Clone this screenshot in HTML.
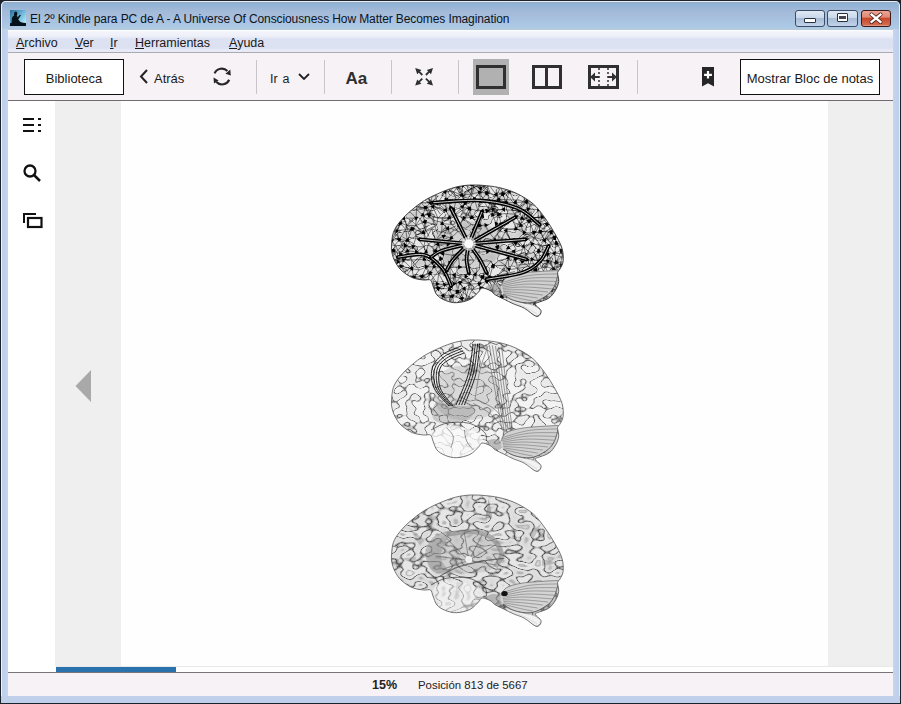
<!DOCTYPE html>
<html><head><meta charset="utf-8">
<style>
*{margin:0;padding:0;box-sizing:border-box}
html,body{width:901px;height:704px;overflow:hidden;background:#1d232c}
body{position:relative;font-family:"Liberation Sans",sans-serif;}
.abs{position:absolute}
#frame{left:0;top:0;width:901px;height:704px;background:#1d232c;border-radius:6px 6px 0 0}
#inner{left:1px;top:1px;width:899px;height:702px;border-radius:5px 5px 0 0;box-shadow:inset 1px 0 0 #eef3fa,inset -1px 0 0 #e8eef6;
 background:linear-gradient(#e6edf5 0px,#e6edf5 1px,#9aabc2 1px,#9aabc2 2px,#8db2d6 2px,#a3b9d8 10px,#acc9e6 26px,#b9cbdb 29px,#b9cbdb 29px);}
#leftfr{left:1px;top:29px;width:7px;height:674px;background:linear-gradient(90deg,#f0f3fa 0,#f0f3fa 1px,#bccfea 1px,#c4d3ee 6px,#c9d8f0 7px)}
#rightfr{left:893px;top:29px;width:7px;height:674px;background:linear-gradient(90deg,#c9d8f0 0,#c4d3ee 1px,#bccfea 6px,#e8eef6 6px)}
#botfr{left:1px;top:696px;width:899px;height:7px;background:#c0d0ea}
.title{left:30px;top:12px;font-size:12px;color:#0b1322;white-space:nowrap;letter-spacing:-0.1px}
#menubar{left:8px;top:30px;width:885px;height:23px;background:linear-gradient(#ffffff 0,#f2f3fb 2px,#eef0f9 6px,#dde2f3 9px,#dce1f2 18px,#e8ebf7 20px,#e8ebf7 22px,#a9aab2 22px)}
.mi{top:36px;font-size:12.5px;color:#1a1a1a;white-space:nowrap}
.mi u{text-decoration:underline;text-underline-offset:1px}
#toolbar{left:8px;top:53px;width:885px;height:48px;background:#f6f2f5;border-bottom:1px solid #6f6d72}
#content{left:8px;top:101px;width:885px;height:571px;background:#ffffff}
#sidegray{left:55px;top:101px;width:66px;height:565px;background:#efefef}
#rightgray{left:828px;top:101px;width:65px;height:565px;background:#efefef}
#page{left:121px;top:101px;width:707px;height:565px;background:#fefefe}
#progline{left:56px;top:666px;width:837px;height:1px;background:#e9e9e9}
#progbar{left:56px;top:667px;width:120px;height:5px;background:#2a72ad}
#statusline{left:8px;top:672px;width:885px;height:1px;background:#767478}
#status{left:8px;top:673px;width:885px;height:23px;background:#f6f2f5}
.sep{top:60px;width:1px;height:34px;background:#c9c5c8}
.btnbox{border:1.5px solid #111;background:#fff;font-size:13px;color:#1a1a1a;text-align:center;white-space:nowrap;padding-top:1.5px}
.tb{font-size:13px;color:#1a1a1a;white-space:nowrap}
.wbtn{top:10px;height:17px;border:1px solid #3c4c66;border-radius:3px}
</style></head><body>
<div class="abs" id="frame"></div>
<div class="abs" id="inner"></div>
<div class="abs" id="leftfr"></div>
<div class="abs" id="rightfr"></div>
<div class="abs" id="botfr"></div>

<!-- app icon -->
<svg class="abs" style="left:10px;top:10px" width="16" height="16" viewBox="0 0 16 16">
 <defs><linearGradient id="ig" x1="0" y1="0" x2="1" y2="0.8"><stop offset="0" stop-color="#2f6f9a"/><stop offset="0.45" stop-color="#5aa6cf"/><stop offset="1" stop-color="#b9f0fb"/></linearGradient></defs>
 <rect x="0" y="0" width="16" height="16" fill="url(#ig)"/>
 <path d="M0 16 L0 13.2 L1.6 12.8 L1.9 8.2 Q2.4 5.9 4.2 5.4 L4 4.4 Q3.9 1.6 5.8 1.4 Q7.6 1.5 7.3 3.8 L6.8 5.5 Q7.6 6.4 7.5 7.4 L9.8 4.7 L10.9 5.3 L8.2 9.6 L10.4 11.9 Q13 12.9 16 13 L16 16 Z" fill="#06121a"/>
</svg>
<div class="abs title">El 2º Kindle para PC de A - A Universe Of Consciousness How Matter Becomes Imagination</div>

<div class="abs wbtn" style="left:795px;width:30px;background:linear-gradient(#dfe8f4 0,#c9d7ea 45%,#a9bcd6 50%,#c2d4ea 100%)"></div>
<div class="abs" style="left:804px;top:18px;width:12px;height:5px;border:1px solid #27303d;background:#fff;border-radius:1px"></div>
<div class="abs wbtn" style="left:827px;width:31px;background:linear-gradient(#dfe8f4 0,#c9d7ea 45%,#a9bcd6 50%,#c2d4ea 100%)"></div>
<div class="abs" style="left:837px;top:13px;width:11px;height:9px;border:1px solid #27303d;background:#fff;border-radius:1px"></div>
<div class="abs" style="left:839px;top:16px;width:7px;height:3px;background:#445"></div>
<div class="abs wbtn" style="left:861px;width:30px;border-color:#3a1a1a;background:linear-gradient(#eba594 0,#e08a76 40%,#c9482c 50%,#d46a4f 90%,#e8a090 100%)"></div>
<svg class="abs" style="left:866px;top:11px" width="20" height="15" viewBox="0 0 20 15">
 <path d="M5.5 3.5 L14.5 11 M14.5 3.5 L5.5 11" stroke="#4a1c14" stroke-width="4" stroke-linecap="round"/>
 <path d="M5.5 3.5 L14.5 11 M14.5 3.5 L5.5 11" stroke="#ffffff" stroke-width="2.3" stroke-linecap="square"/>
</svg>

<div class="abs" id="menubar"></div>
<div class="abs mi" style="left:16px"><u>A</u>rchivo</div>
<div class="abs mi" style="left:75px"><u>V</u>er</div>
<div class="abs mi" style="left:110px"><u>I</u>r</div>
<div class="abs mi" style="left:135px"><u>H</u>erramientas</div>
<div class="abs mi" style="left:229px"><u>A</u>yuda</div>

<div class="abs" id="toolbar"></div>
<div class="abs btnbox" style="left:24px;top:59px;width:100px;height:36px;line-height:34px">Biblioteca</div>
<svg class="abs" style="left:138px;top:68px" width="12" height="18" viewBox="0 0 12 18"><path d="M9 2 L3 8.5 L9 15" fill="none" stroke="#222" stroke-width="2"/></svg>
<div class="abs tb" style="left:154px;top:70.5px">Atrás</div>
<!-- refresh -->
<svg class="abs" style="left:205px;top:60px" width="35" height="35" viewBox="0 0 35 35">
 <path d="M9.6 13.4 A7.8 7.8 0 0 1 22.4 11" fill="none" stroke="#262626" stroke-width="2.1"/>
 <path d="M20.4 13.8 L25.3 9.6 L25.8 15.4 Z" fill="#262626"/>
 <path d="M24.2 19.8 A7.8 7.8 0 0 1 11.4 22" fill="none" stroke="#262626" stroke-width="2.1"/>
 <path d="M8.5 17.6 L9 23.4 L13.6 20.4 Z" fill="#262626"/>
</svg>
<div class="abs sep" style="left:256px"></div>
<div class="abs tb" style="left:270px;top:72px;font-size:12.5px;word-spacing:1.5px">Ir a</div>
<svg class="abs" style="left:297px;top:72px" width="14" height="10" viewBox="0 0 14 10"><path d="M2 2 L7 7 L12 2" fill="none" stroke="#222" stroke-width="1.8"/></svg>
<div class="abs sep" style="left:324px"></div>
<div class="abs tb" style="left:345.5px;top:69px;font-size:17px;font-weight:bold;color:#2e2e2e">Aa</div>
<div class="abs sep" style="left:391px"></div>
<!-- expand -->
<svg class="abs" style="left:408px;top:60px" width="34" height="34" viewBox="0 0 34 34">
 <path d="M7.2 8.0 L9.2 14.2 L13.4 9.9 Z M25.0 8.0 L18.8 9.9 L23.0 14.2 Z M7.2 25.6 L13.4 23.7 L9.2 19.4 Z M25.0 25.6 L23.0 19.4 L18.8 23.7 Z" fill="#2e2e2e"/>
 <path d="M11.0 11.7 L14.3 15.0 M21.2 11.7 L17.9 15.0 M11.0 21.9 L14.3 18.6 M21.2 21.9 L17.9 18.6" stroke="#2e2e2e" stroke-width="1.8"/>
</svg>
<div class="abs sep" style="left:458px"></div>
<div class="abs" style="left:473px;top:59px;width:36px;height:36px;background:#b1b1b1"></div>
<div class="abs" style="left:476px;top:65px;width:30px;height:24px;border:3px solid #303030;background:#b1b1b1"></div>
<div class="abs" style="left:532px;top:65px;width:30px;height:24px;border:3px solid #303030;background:#f6f2f5"></div>
<div class="abs" style="left:545px;top:65px;width:3px;height:24px;background:#303030"></div>
<svg class="abs" style="left:588px;top:65px" width="31" height="24" viewBox="0 0 31 24">
 <rect x="1.5" y="1.5" width="28" height="21" fill="none" stroke="#303030" stroke-width="3"/>
 <path d="M11 3 V21 M20 3 V21" stroke="#303030" stroke-width="1.5" stroke-dasharray="2 2"/>
 <path d="M3 12 H11 M20 12 H28" stroke="#303030" stroke-width="2"/>
 <path d="M2 12 L7 7.5 L7 16.5 Z M29 12 L24 7.5 L24 16.5 Z" fill="#303030"/>
</svg>
<div class="abs sep" style="left:637px"></div>
<svg class="abs" style="left:702px;top:67px" width="12" height="20" viewBox="0 0 12 20">
 <path d="M0 0 H12 V19.6 L6 16.3 L0 19.6 Z" fill="#262626"/>
 <path d="M6 4 V11.6 M2.1 7.9 H9.9" stroke="#fff" stroke-width="2.2"/>
</svg>
<div class="abs btnbox" style="left:740px;top:59px;width:140px;height:36px;line-height:34px">Mostrar Bloc de notas</div>

<div class="abs" id="content"></div>
<div class="abs" id="sidegray"></div>
<div class="abs" id="rightgray"></div>
<div class="abs" id="page"></div>

<!-- sidebar icons -->
<svg class="abs" style="left:22px;top:117px" width="20" height="16" viewBox="0 0 20 16">
 <g fill="#111"><rect x="1" y="1" width="11" height="2"/><rect x="1" y="7" width="11" height="2"/><rect x="1" y="13" width="11" height="2"/>
 <rect x="16" y="1" width="3" height="2"/><rect x="16" y="7" width="3" height="2"/><rect x="16" y="13" width="3" height="2"/></g>
</svg>
<svg class="abs" style="left:22px;top:163px" width="20" height="20" viewBox="0 0 20 20">
 <circle cx="8" cy="8" r="5.5" fill="none" stroke="#111" stroke-width="2.3"/>
 <path d="M12 12 L18 18" stroke="#111" stroke-width="2.5"/>
</svg>
<svg class="abs" style="left:22px;top:211px" width="21" height="18" viewBox="0 0 21 18">
 <path d="M2 12 V3 H14" fill="none" stroke="#111" stroke-width="2"/>
 <rect x="6" y="7" width="13.5" height="9" fill="none" stroke="#111" stroke-width="2.2"/>
</svg>
<svg class="abs" style="left:74px;top:369px" width="18" height="34" viewBox="0 0 18 34"><path d="M1.5 17 L17 1 L17 33 Z" fill="#a9a9a9"/></svg>

<div class="abs" id="progline"></div>
<div class="abs" id="progbar"></div>
<div class="abs" id="statusline"></div>
<div class="abs" id="status"></div>
<div class="abs tb" style="left:372px;top:678px;font-size:12.5px;font-weight:bold;color:#222">15%</div>
<div class="abs tb" style="left:418px;top:678.5px;font-size:11.4px;color:#222">Posición 813 de 5667</div>

<svg width="0" height="0" style="position:absolute"><defs>
<path id="bo" d="M11.5 71.0 C11.7 67.6 11.9 61.8 13.3 57.7 C14.7 53.6 17.0 50.3 20.0 46.6 C23.0 42.9 27.0 39.0 31.1 35.5 C35.2 32.0 39.6 28.4 44.4 25.5 C49.2 22.6 54.7 20.0 59.9 17.8 C65.1 15.6 70.3 13.5 75.5 12.2 C80.7 10.9 85.8 10.2 91.0 10.0 C96.2 9.8 101.3 10.1 106.5 10.7 C111.7 11.2 116.9 11.9 122.1 13.3 C127.3 14.7 132.4 16.3 137.6 18.9 C142.8 21.5 148.6 24.9 153.2 28.9 C157.8 32.9 161.4 38.1 165.0 43.0 C168.6 47.9 171.7 53.0 174.5 58.0 C177.3 63.0 180.6 68.5 182.0 73.3 C183.4 78.1 183.5 83.1 183.1 86.6 C182.7 90.1 180.7 92.4 179.8 94.3 C178.9 96.2 177.8 95.7 177.6 97.7 C177.4 99.7 179.1 103.5 178.7 106.5 C178.3 109.5 177.1 112.6 175.4 115.4 C173.7 118.2 171.7 121.2 168.7 123.2 C165.7 125.2 159.8 126.7 157.6 127.6 C155.4 128.5 155.6 128.1 155.4 128.7 C155.2 129.3 155.6 129.9 156.5 131.0 C157.4 132.1 160.3 133.9 160.9 135.4 C161.5 136.9 160.7 138.9 159.8 139.8 C158.9 140.7 158.0 142.1 155.4 141.0 C152.8 139.9 148.0 135.2 144.3 133.2 C140.6 131.1 136.5 130.2 133.2 128.7 C129.9 127.2 127.3 125.8 124.3 124.3 C121.3 122.8 117.8 121.4 115.4 119.9 C113.0 118.4 112.2 116.7 110.0 115.5 C107.8 114.3 103.9 112.8 102.0 113.0 C100.1 113.2 100.5 115.1 98.5 117.0 C96.5 118.9 93.7 122.6 90.0 124.4 C86.3 126.2 80.7 127.5 76.6 127.7 C72.5 127.9 68.8 126.8 65.5 125.5 C62.2 124.2 59.1 122.4 57.0 120.0 C54.9 117.6 54.1 113.5 53.0 111.0 C51.9 108.5 52.1 106.0 50.5 105.0 C48.9 104.0 46.6 105.4 43.5 105.0 C40.4 104.6 35.8 104.2 32.0 102.5 C28.2 100.8 23.8 97.7 21.0 95.0 C18.2 92.3 16.5 89.3 15.0 86.5 C13.5 83.7 12.6 80.6 12.0 78.0 C11.4 75.4 11.3 74.4 11.5 71.0Z"/>
<clipPath id="bc"><use href="#bo"/></clipPath>
<clipPath id="cb1"><path d="M121.0 111.0 C121.5 108.3 122.8 105.1 126.0 103.0 C129.2 100.9 134.3 99.6 140.0 98.5 C145.7 97.4 153.5 97.0 160.0 96.5 C166.5 96.0 176.0 94.4 179.0 95.5 C182.0 96.6 178.8 100.2 178.0 103.0 C177.2 105.8 176.0 109.0 174.0 112.0 C172.0 115.0 169.8 118.4 166.0 121.0 C162.2 123.6 156.3 127.0 151.0 127.7 C145.7 128.4 138.7 127.0 134.0 125.5 C129.3 124.0 125.2 121.4 123.0 119.0 C120.8 116.6 120.5 113.7 121.0 111.0Z"/></clipPath>
<radialGradient id="shade" cx="0.47" cy="0.45" r="0.55">
 <stop offset="0" stop-color="#fff" stop-opacity="0"/>
 <stop offset="0.75" stop-color="#fff" stop-opacity="0"/>
 <stop offset="1" stop-color="#666" stop-opacity="0.5"/>
</radialGradient>
<filter id="sul1" x="0" y="0" width="200" height="150" filterUnits="userSpaceOnUse">
 <feTurbulence type="fractalNoise" baseFrequency="0.11 0.14" numOctaves="1" seed="3"/>
 <feColorMatrix type="matrix" values="1 0 0 0 0  1 0 0 0 0  1 0 0 0 0  0 0 0 0 1"/>
 <feComponentTransfer>
   <feFuncR type="table" tableValues="0.65 0.66 0.68 0.70 0.71 0.73 0.75 0.77 0.80 0.82 0.86 0.90 0.05 1.00 1.00 1.00 1.00 1.00 1.00 1.00 1.00 1.00 1.00 1.00 1.00"/>
   <feFuncG type="table" tableValues="0.65 0.66 0.68 0.70 0.71 0.73 0.75 0.77 0.80 0.82 0.86 0.90 0.05 1.00 1.00 1.00 1.00 1.00 1.00 1.00 1.00 1.00 1.00 1.00 1.00"/>
   <feFuncB type="table" tableValues="0.65 0.66 0.68 0.70 0.71 0.73 0.75 0.77 0.80 0.82 0.86 0.90 0.05 1.00 1.00 1.00 1.00 1.00 1.00 1.00 1.00 1.00 1.00 1.00 1.00"/>
 </feComponentTransfer>
</filter>
<filter id="sul2" x="0" y="0" width="200" height="150" filterUnits="userSpaceOnUse">
 <feTurbulence type="fractalNoise" baseFrequency="0.11 0.14" numOctaves="1" seed="5"/>
 <feColorMatrix type="matrix" values="1 0 0 0 0  1 0 0 0 0  1 0 0 0 0  0 0 0 0 1"/>
 <feComponentTransfer>
   <feFuncR type="table" tableValues="0.88 0.89 0.89 0.90 0.91 0.92 0.93 0.94 0.96 0.10 1.00 1.00 1.00 1.00 1.00 1.00 1.00 1.00 1.00"/>
   <feFuncG type="table" tableValues="0.88 0.89 0.89 0.90 0.91 0.92 0.93 0.94 0.96 0.10 1.00 1.00 1.00 1.00 1.00 1.00 1.00 1.00 1.00"/>
   <feFuncB type="table" tableValues="0.88 0.89 0.89 0.90 0.91 0.92 0.93 0.94 0.96 0.10 1.00 1.00 1.00 1.00 1.00 1.00 1.00 1.00 1.00"/>
 </feComponentTransfer>
</filter>
<filter id="sul3" x="0" y="0" width="200" height="150" filterUnits="userSpaceOnUse">
 <feTurbulence type="fractalNoise" baseFrequency="0.085 0.13" numOctaves="1" seed="13"/>
 <feColorMatrix type="matrix" values="1 0 0 0 0  1 0 0 0 0  1 0 0 0 0  0 0 0 0 1"/>
 <feComponentTransfer>
   <feFuncR type="table" tableValues="0.65 0.69 0.73 0.77 0.81 0.55 0.88 0.92 0.96 0.08 1.00 1.00 1.00 0.55 1.00 1.00 1.00 1.00 1.00"/>
   <feFuncG type="table" tableValues="0.65 0.69 0.73 0.77 0.81 0.55 0.88 0.92 0.96 0.08 1.00 1.00 1.00 0.55 1.00 1.00 1.00 1.00 1.00"/>
   <feFuncB type="table" tableValues="0.65 0.69 0.73 0.77 0.81 0.55 0.88 0.92 0.96 0.08 1.00 1.00 1.00 0.55 1.00 1.00 1.00 1.00 1.00"/>
 </feComponentTransfer>
</filter>
</defs></svg>
<svg class="abs" style="left:380px;top:175px" width="200" height="150" viewBox="0 0 200 150">
<g clip-path="url(#bc)">
<rect width="200" height="150" fill="#e8e8e8"/>
<rect width="200" height="150" filter="url(#sul1)" style="mix-blend-mode:multiply"/>
<ellipse cx="88" cy="70" rx="35" ry="24" fill="#aaa" opacity="0.35"/>
<path d="M-1.6 -5.4 L7.7 -5.1 M-1.6 -5.4 L3.6 2.5 M-1.6 -5.4 L-2.0 2.5 M7.7 -5.1 L14.6 -3.9 M7.7 -5.1 L13.2 2.9 M7.7 -5.1 L3.6 2.5 M14.6 -3.9 L27.3 -1.9 M14.6 -3.9 L20.3 5.2 M14.6 -3.9 L13.2 2.9 M27.3 -1.9 L35.1 -4.8 M27.3 -1.9 L28.6 4.3 M27.3 -1.9 L20.3 5.2 M35.1 -4.8 L42.4 -4.5 M35.1 -4.8 L40.0 2.0 M35.1 -4.8 L28.6 4.3 M42.4 -4.5 L49.1 -5.4 M42.4 -4.5 L44.3 2.6 M42.4 -4.5 L40.0 2.0 M49.1 -5.4 L57.8 -1.3 M49.1 -5.4 L56.3 4.6 M49.1 -5.4 L44.3 2.6 M57.8 -1.3 L69.4 -1.9 M57.8 -1.3 L62.2 3.2 M57.8 -1.3 L56.3 4.6 M69.4 -1.9 L77.8 -4.9 M69.4 -1.9 L70.4 3.8 M69.4 -1.9 L62.2 3.2 M77.8 -4.9 L83.8 -2.8 M77.8 -4.9 L78.2 5.0 M77.8 -4.9 L70.4 3.8 M83.8 -2.8 L94.4 -1.6 M83.8 -2.8 L91.0 6.3 M83.8 -2.8 L78.2 5.0 M94.4 -1.6 L103.7 -5.5 M94.4 -1.6 L98.7 6.3 M94.4 -1.6 L91.0 6.3 M103.7 -5.5 L110.8 -2.5 M103.7 -5.5 L103.6 2.9 M103.7 -5.5 L98.7 6.3 M110.8 -2.5 L118.8 -5.0 M110.8 -2.5 L116.8 5.4 M110.8 -2.5 L103.6 2.9 M118.8 -5.0 L127.1 -5.4 M118.8 -5.0 L122.6 6.2 M118.8 -5.0 L116.8 5.4 M127.1 -5.4 L137.9 -1.6 M127.1 -5.4 L132.1 5.6 M127.1 -5.4 L122.6 6.2 M137.9 -1.6 L144.5 -4.4 M137.9 -1.6 L139.0 2.5 M137.9 -1.6 L132.1 5.6 M144.5 -4.4 L154.8 -3.0 M144.5 -4.4 L148.2 2.2 M144.5 -4.4 L139.0 2.5 M154.8 -3.0 L163.2 -1.7 M154.8 -3.0 L156.4 6.3 M154.8 -3.0 L148.2 2.2 M163.2 -1.7 L169.8 -3.8 M163.2 -1.7 L164.7 1.5 M163.2 -1.7 L156.4 6.3 M169.8 -3.8 L178.7 -3.7 M169.8 -3.8 L171.7 2.3 M169.8 -3.8 L164.7 1.5 M178.7 -3.7 L185.1 -4.4 M178.7 -3.7 L183.9 3.3 M178.7 -3.7 L171.7 2.3 M185.1 -4.4 L196.8 -5.7 M185.1 -4.4 L190.0 2.0 M185.1 -4.4 L183.9 3.3 M196.8 -5.7 L201.5 -2.8 M196.8 -5.7 L201.9 3.6 M196.8 -5.7 L190.0 2.0 M201.5 -2.8 L211.2 -3.2 M201.5 -2.8 L206.5 1.8 M201.5 -2.8 L201.9 3.6 M211.2 -3.2 L220.6 -4.2 M211.2 -3.2 L214.3 2.3 M211.2 -3.2 L206.5 1.8 M220.6 -4.2 L214.3 2.3 M-2.0 2.5 L3.6 2.5 M-2.0 2.5 L0.6 9.6 M3.6 2.5 L13.2 2.9 M3.6 2.5 L6.0 11.3 M3.6 2.5 L0.6 9.6 M13.2 2.9 L20.3 5.2 M13.2 2.9 L15.5 13.9 M13.2 2.9 L6.0 11.3 M20.3 5.2 L28.6 4.3 M20.3 5.2 L23.4 11.5 M20.3 5.2 L15.5 13.9 M28.6 4.3 L40.0 2.0 M28.6 4.3 L35.1 10.9 M28.6 4.3 L23.4 11.5 M40.0 2.0 L44.3 2.6 M40.0 2.0 L44.7 11.3 M40.0 2.0 L35.1 10.9 M44.3 2.6 L56.3 4.6 M44.3 2.6 L49.5 10.9 M44.3 2.6 L44.7 11.3 M56.3 4.6 L62.2 3.2 M56.3 4.6 L56.9 11.0 M56.3 4.6 L49.5 10.9 M62.2 3.2 L70.4 3.8 M62.2 3.2 L66.5 13.3 M62.2 3.2 L56.9 11.0 M70.4 3.8 L78.2 5.0 M70.4 3.8 L77.9 11.4 M70.4 3.8 L66.5 13.3 M78.2 5.0 L91.0 6.3 M78.2 5.0 L82.4 10.2 M78.2 5.0 L77.9 11.4 M91.0 6.3 L98.7 6.3 M91.0 6.3 L92.0 9.9 M91.0 6.3 L82.4 10.2 M98.7 6.3 L103.6 2.9 M98.7 6.3 L100.4 13.2 M98.7 6.3 L92.0 9.9 M103.6 2.9 L116.8 5.4 M103.6 2.9 L108.5 9.2 M103.6 2.9 L100.4 13.2 M116.8 5.4 L122.6 6.2 M116.8 5.4 L120.9 11.7 M116.8 5.4 L108.5 9.2 M122.6 6.2 L132.1 5.6 M122.6 6.2 L129.7 10.9 M122.6 6.2 L120.9 11.7 M132.1 5.6 L139.0 2.5 M132.1 5.6 L137.8 12.2 M132.1 5.6 L129.7 10.9 M139.0 2.5 L148.2 2.2 M139.0 2.5 L145.7 12.6 M139.0 2.5 L137.8 12.2 M148.2 2.2 L156.4 6.3 M148.2 2.2 L152.7 9.4 M148.2 2.2 L145.7 12.6 M156.4 6.3 L164.7 1.5 M156.4 6.3 L159.8 13.3 M156.4 6.3 L152.7 9.4 M164.7 1.5 L171.7 2.3 M164.7 1.5 L171.7 13.5 M164.7 1.5 L159.8 13.3 M171.7 2.3 L183.9 3.3 M171.7 2.3 L177.4 12.2 M171.7 2.3 L171.7 13.5 M183.9 3.3 L190.0 2.0 M183.9 3.3 L188.2 12.1 M183.9 3.3 L177.4 12.2 M190.0 2.0 L201.9 3.6 M190.0 2.0 L196.8 11.5 M190.0 2.0 L188.2 12.1 M201.9 3.6 L206.5 1.8 M201.9 3.6 L204.5 12.3 M201.9 3.6 L196.8 11.5 M206.5 1.8 L214.3 2.3 M206.5 1.8 L211.1 13.5 M206.5 1.8 L204.5 12.3 M214.3 2.3 L223.0 9.3 M214.3 2.3 L211.1 13.5 M0.6 9.6 L6.0 11.3 M0.6 9.6 L4.8 16.5 M0.6 9.6 L-2.1 21.1 M6.0 11.3 L15.5 13.9 M6.0 11.3 L14.5 16.9 M6.0 11.3 L4.8 16.5 M15.5 13.9 L23.4 11.5 M15.5 13.9 L23.3 19.6 M15.5 13.9 L14.5 16.9 M23.4 11.5 L35.1 10.9 M23.4 11.5 L27.3 17.1 M23.4 11.5 L23.3 19.6 M35.1 10.9 L44.7 11.3 M35.1 10.9 L38.7 19.1 M35.1 10.9 L27.3 17.1 M44.7 11.3 L49.5 10.9 M44.7 11.3 L47.7 20.9 M44.7 11.3 L38.7 19.1 M49.5 10.9 L56.9 11.0 M49.5 10.9 L53.6 16.3 M49.5 10.9 L47.7 20.9 M56.9 11.0 L66.5 13.3 M56.9 11.0 L65.6 16.4 M56.9 11.0 L53.6 16.3 M66.5 13.3 L77.9 11.4 M66.5 13.3 L73.9 16.9 M66.5 13.3 L65.6 16.4 M77.9 11.4 L82.4 10.2 M77.9 11.4 L82.0 20.2 M77.9 11.4 L73.9 16.9 M82.4 10.2 L92.0 9.9 M82.4 10.2 L90.9 19.0 M82.4 10.2 L82.0 20.2 M92.0 9.9 L100.4 13.2 M92.0 9.9 L99.4 17.3 M92.0 9.9 L90.9 19.0 M100.4 13.2 L108.5 9.2 M100.4 13.2 L106.9 17.9 M100.4 13.2 L99.4 17.3 M108.5 9.2 L120.9 11.7 M108.5 9.2 L116.5 20.2 M108.5 9.2 L106.9 17.9 M120.9 11.7 L129.7 10.9 M120.9 11.7 L122.9 18.9 M120.9 11.7 L116.5 20.2 M129.7 10.9 L137.8 12.2 M129.7 10.9 L129.1 16.5 M129.7 10.9 L122.9 18.9 M137.8 12.2 L145.7 12.6 M137.8 12.2 L140.5 18.7 M137.8 12.2 L129.1 16.5 M145.7 12.6 L152.7 9.4 M145.7 12.6 L150.3 19.3 M145.7 12.6 L140.5 18.7 M152.7 9.4 L159.8 13.3 M152.7 9.4 L155.2 18.1 M152.7 9.4 L150.3 19.3 M159.8 13.3 L171.7 13.5 M159.8 13.3 L166.8 18.9 M159.8 13.3 L155.2 18.1 M171.7 13.5 L177.4 12.2 M171.7 13.5 L171.6 20.5 M171.7 13.5 L166.8 18.9 M177.4 12.2 L188.2 12.1 M177.4 12.2 L184.1 16.7 M177.4 12.2 L171.6 20.5 M188.2 12.1 L196.8 11.5 M188.2 12.1 L191.2 18.2 M188.2 12.1 L184.1 16.7 M196.8 11.5 L204.5 12.3 M196.8 11.5 L200.9 17.8 M196.8 11.5 L191.2 18.2 M204.5 12.3 L211.1 13.5 M204.5 12.3 L206.7 18.7 M204.5 12.3 L200.9 17.8 M211.1 13.5 L223.0 9.3 M211.1 13.5 L218.8 16.8 M211.1 13.5 L206.7 18.7 M223.0 9.3 L218.8 16.8 M-2.1 21.1 L4.8 16.5 M-2.1 21.1 L-2.2 26.8 M4.8 16.5 L14.5 16.9 M4.8 16.5 L10.2 26.2 M4.8 16.5 L-2.2 26.8 M14.5 16.9 L23.3 19.6 M14.5 16.9 L16.4 28.0 M14.5 16.9 L10.2 26.2 M23.3 19.6 L27.3 17.1 M23.3 19.6 L26.6 24.0 M23.3 19.6 L16.4 28.0 M27.3 17.1 L38.7 19.1 M27.3 17.1 L35.7 24.7 M27.3 17.1 L26.6 24.0 M38.7 19.1 L47.7 20.9 M38.7 19.1 L41.3 27.9 M38.7 19.1 L35.7 24.7 M47.7 20.9 L53.6 16.3 M47.7 20.9 L50.4 27.7 M47.7 20.9 L41.3 27.9 M53.6 16.3 L65.6 16.4 M53.6 16.3 L57.6 28.1 M53.6 16.3 L50.4 27.7 M65.6 16.4 L73.9 16.9 M65.6 16.4 L66.1 24.4 M65.6 16.4 L57.6 28.1 M73.9 16.9 L82.0 20.2 M73.9 16.9 L76.2 25.4 M73.9 16.9 L66.1 24.4 M82.0 20.2 L90.9 19.0 M82.0 20.2 L85.0 28.2 M82.0 20.2 L76.2 25.4 M90.9 19.0 L99.4 17.3 M90.9 19.0 L94.3 23.7 M90.9 19.0 L85.0 28.2 M99.4 17.3 L106.9 17.9 M99.4 17.3 L100.8 26.4 M99.4 17.3 L94.3 23.7 M106.9 17.9 L116.5 20.2 M106.9 17.9 L110.2 27.3 M106.9 17.9 L100.8 26.4 M116.5 20.2 L122.9 18.9 M116.5 20.2 L118.7 24.1 M116.5 20.2 L110.2 27.3 M122.9 18.9 L129.1 16.5 M122.9 18.9 L126.0 27.9 M122.9 18.9 L118.7 24.1 M129.1 16.5 L140.5 18.7 M129.1 16.5 L135.0 27.5 M129.1 16.5 L126.0 27.9 M140.5 18.7 L150.3 19.3 M140.5 18.7 L146.7 26.8 M140.5 18.7 L135.0 27.5 M150.3 19.3 L155.2 18.1 M150.3 19.3 L153.6 26.7 M150.3 19.3 L146.7 26.8 M155.2 18.1 L166.8 18.9 M155.2 18.1 L160.3 28.2 M155.2 18.1 L153.6 26.7 M166.8 18.9 L171.6 20.5 M166.8 18.9 L169.6 28.2 M166.8 18.9 L160.3 28.2 M171.6 20.5 L184.1 16.7 M171.6 20.5 L177.3 28.0 M171.6 20.5 L169.6 28.2 M184.1 16.7 L191.2 18.2 M184.1 16.7 L188.2 26.7 M184.1 16.7 L177.3 28.0 M191.2 18.2 L200.9 17.8 M191.2 18.2 L195.0 24.4 M191.2 18.2 L188.2 26.7 M200.9 17.8 L206.7 18.7 M200.9 17.8 L205.1 25.5 M200.9 17.8 L195.0 24.4 M206.7 18.7 L218.8 16.8 M206.7 18.7 L213.1 24.4 M206.7 18.7 L205.1 25.5 M218.8 16.8 L218.7 24.4 M218.8 16.8 L213.1 24.4 M-2.2 26.8 L10.2 26.2 M-2.2 26.8 L6.0 32.9 M-2.2 26.8 L-3.0 32.0 M10.2 26.2 L16.4 28.0 M10.2 26.2 L12.9 32.8 M10.2 26.2 L6.0 32.9 M16.4 28.0 L26.6 24.0 M16.4 28.0 L21.6 31.5 M16.4 28.0 L12.9 32.8 M26.6 24.0 L35.7 24.7 M26.6 24.0 L29.0 35.8 M26.6 24.0 L21.6 31.5 M35.7 24.7 L41.3 27.9 M35.7 24.7 L36.4 34.4 M35.7 24.7 L29.0 35.8 M41.3 27.9 L50.4 27.7 M41.3 27.9 L45.6 32.6 M41.3 27.9 L36.4 34.4 M50.4 27.7 L57.6 28.1 M50.4 27.7 L52.6 31.2 M50.4 27.7 L45.6 32.6 M57.6 28.1 L66.1 24.4 M57.6 28.1 L65.7 35.2 M57.6 28.1 L52.6 31.2 M66.1 24.4 L76.2 25.4 M66.1 24.4 L73.5 35.1 M66.1 24.4 L65.7 35.2 M76.2 25.4 L85.0 28.2 M76.2 25.4 L82.8 31.9 M76.2 25.4 L73.5 35.1 M85.0 28.2 L94.3 23.7 M85.0 28.2 L89.4 33.6 M85.0 28.2 L82.8 31.9 M94.3 23.7 L100.8 26.4 M94.3 23.7 L97.9 35.8 M94.3 23.7 L89.4 33.6 M100.8 26.4 L110.2 27.3 M100.8 26.4 L97.9 35.8 M110.2 27.3 L118.7 24.1 M110.2 27.3 L112.6 34.3 M110.2 27.3 L107.3 35.9 M118.7 24.1 L126.0 27.9 M118.7 24.1 L123.9 34.8 M118.7 24.1 L112.6 34.3 M126.0 27.9 L135.0 27.5 M126.0 27.9 L132.1 35.2 M126.0 27.9 L123.9 34.8 M135.0 27.5 L146.7 26.8 M135.0 27.5 L139.0 35.7 M135.0 27.5 L132.1 35.2 M146.7 26.8 L153.6 26.7 M146.7 26.8 L148.0 34.1 M146.7 26.8 L139.0 35.7 M153.6 26.7 L160.3 28.2 M153.6 26.7 L159.0 34.6 M153.6 26.7 L148.0 34.1 M160.3 28.2 L169.6 28.2 M160.3 28.2 L164.5 32.2 M160.3 28.2 L159.0 34.6 M169.6 28.2 L177.3 28.0 M169.6 28.2 L173.1 34.2 M169.6 28.2 L164.5 32.2 M177.3 28.0 L188.2 26.7 M177.3 28.0 L185.0 35.6 M177.3 28.0 L173.1 34.2 M188.2 26.7 L195.0 24.4 M188.2 26.7 L190.5 33.1 M188.2 26.7 L185.0 35.6 M195.0 24.4 L205.1 25.5 M195.0 24.4 L201.1 32.5 M195.0 24.4 L190.5 33.1 M205.1 25.5 L213.1 24.4 M205.1 25.5 L207.6 31.1 M205.1 25.5 L201.1 32.5 M213.1 24.4 L218.7 24.4 M213.1 24.4 L214.9 33.8 M213.1 24.4 L207.6 31.1 M218.7 24.4 L214.9 33.8 M-3.0 32.0 L6.0 32.9 M-3.0 32.0 L0.7 41.5 M6.0 32.9 L12.9 32.8 M6.0 32.9 L7.6 43.2 M6.0 32.9 L0.7 41.5 M12.9 32.8 L21.6 31.5 M12.9 32.8 L17.4 39.3 M12.9 32.8 L7.6 43.2 M21.6 31.5 L29.0 35.8 M21.6 31.5 L23.1 43.3 M21.6 31.5 L17.4 39.3 M29.0 35.8 L36.4 34.4 M29.0 35.8 L36.2 43.1 M29.0 35.8 L23.1 43.3 M36.4 34.4 L45.6 32.6 M36.4 34.4 L42.8 40.0 M36.4 34.4 L36.2 43.1 M45.6 32.6 L52.6 31.2 M45.6 32.6 L48.7 39.8 M45.6 32.6 L42.8 40.0 M52.6 31.2 L65.7 35.2 M52.6 31.2 L57.9 43.1 M52.6 31.2 L48.7 39.8 M65.7 35.2 L73.5 35.1 M65.7 35.2 L69.7 42.4 M65.7 35.2 L57.9 43.1 M73.5 35.1 L82.8 31.9 M73.5 35.1 L74.5 39.7 M73.5 35.1 L69.7 42.4 M82.8 31.9 L89.4 33.6 M82.8 31.9 L74.5 39.7 M89.4 33.6 L97.9 35.8 M89.4 33.6 L91.6 42.4 M89.4 33.6 L83.7 43.2 M97.9 35.8 L107.3 35.9 M97.9 35.8 L91.6 42.4 M107.3 35.9 L112.6 34.3 M107.3 35.9 L112.5 39.8 M112.6 34.3 L123.9 34.8 M112.6 34.3 L118.9 39.3 M112.6 34.3 L112.5 39.8 M123.9 34.8 L132.1 35.2 M123.9 34.8 L118.9 39.3 M132.1 35.2 L139.0 35.7 M132.1 35.2 L134.8 39.1 M139.0 35.7 L148.0 34.1 M139.0 35.7 L142.1 43.4 M139.0 35.7 L134.8 39.1 M148.0 34.1 L159.0 34.6 M148.0 34.1 L151.7 42.9 M148.0 34.1 L142.1 43.4 M159.0 34.6 L164.5 32.2 M159.0 34.6 L162.3 42.1 M159.0 34.6 L151.7 42.9 M164.5 32.2 L173.1 34.2 M164.5 32.2 L170.5 43.2 M164.5 32.2 L162.3 42.1 M173.1 34.2 L185.0 35.6 M173.1 34.2 L180.1 42.1 M173.1 34.2 L170.5 43.2 M185.0 35.6 L190.5 33.1 M185.0 35.6 L187.0 41.9 M185.0 35.6 L180.1 42.1 M190.5 33.1 L201.1 32.5 M190.5 33.1 L196.4 41.2 M190.5 33.1 L187.0 41.9 M201.1 32.5 L207.6 31.1 M201.1 32.5 L203.8 39.2 M201.1 32.5 L196.4 41.2 M207.6 31.1 L214.9 33.8 M207.6 31.1 L214.0 40.9 M207.6 31.1 L203.8 39.2 M214.9 33.8 L218.6 39.3 M214.9 33.8 L214.0 40.9 M0.7 41.5 L7.6 43.2 M0.7 41.5 L3.5 49.3 M0.7 41.5 L-2.6 47.2 M7.6 43.2 L17.4 39.3 M7.6 43.2 L14.3 47.5 M7.6 43.2 L3.5 49.3 M17.4 39.3 L23.1 43.3 M17.4 39.3 L20.4 48.0 M17.4 39.3 L14.3 47.5 M23.1 43.3 L36.2 43.1 M23.1 43.3 L27.1 50.3 M23.1 43.3 L20.4 48.0 M36.2 43.1 L35.6 50.7 M36.2 43.1 L27.1 50.3 M42.8 40.0 L48.7 39.8 M42.8 40.0 L35.6 50.7 M48.7 39.8 L57.9 43.1 M48.7 39.8 L56.7 50.0 M57.9 43.1 L69.7 42.4 M57.9 43.1 L56.7 50.0 M69.7 42.4 L74.5 39.7 M69.7 42.4 L71.9 49.5 M69.7 42.4 L62.2 48.6 M74.5 39.7 L83.7 43.2 M83.7 43.2 L91.6 42.4 M83.7 43.2 L91.5 49.4 M83.7 43.2 L78.9 50.0 M91.6 42.4 L102.7 41.2 M91.6 42.4 L99.6 50.6 M102.7 41.2 L99.6 50.6 M112.5 39.8 L118.9 39.3 M112.5 39.8 L116.2 48.8 M118.9 39.3 L125.2 38.6 M118.9 39.3 L121.0 49.0 M118.9 39.3 L116.2 48.8 M125.2 38.6 L134.8 39.1 M125.2 38.6 L133.6 47.4 M134.8 39.1 L142.1 43.4 M134.8 39.1 L140.7 50.4 M134.8 39.1 L133.6 47.4 M142.1 43.4 L151.7 42.9 M142.1 43.4 L149.0 46.1 M142.1 43.4 L140.7 50.4 M151.7 42.9 L162.3 42.1 M151.7 42.9 L157.7 47.1 M151.7 42.9 L149.0 46.1 M162.3 42.1 L170.5 43.2 M162.3 42.1 L167.3 49.2 M162.3 42.1 L157.7 47.1 M170.5 43.2 L180.1 42.1 M170.5 43.2 L173.0 50.3 M170.5 43.2 L167.3 49.2 M180.1 42.1 L187.0 41.9 M180.1 42.1 L183.1 47.6 M180.1 42.1 L173.0 50.3 M187.0 41.9 L196.4 41.2 M187.0 41.9 L192.7 50.3 M187.0 41.9 L183.1 47.6 M196.4 41.2 L203.8 39.2 M196.4 41.2 L201.5 50.3 M196.4 41.2 L192.7 50.3 M203.8 39.2 L214.0 40.9 M203.8 39.2 L208.8 49.4 M203.8 39.2 L201.5 50.3 M214.0 40.9 L218.6 39.3 M214.0 40.9 L217.0 48.5 M214.0 40.9 L208.8 49.4 M218.6 39.3 L217.0 48.5 M-2.6 47.2 L3.5 49.3 M-2.6 47.2 L2.2 55.0 M3.5 49.3 L14.3 47.5 M3.5 49.3 L6.2 56.8 M3.5 49.3 L2.2 55.0 M14.3 47.5 L20.4 48.0 M14.3 47.5 L16.7 56.0 M14.3 47.5 L6.2 56.8 M20.4 48.0 L27.1 50.3 M20.4 48.0 L25.7 54.5 M20.4 48.0 L16.7 56.0 M27.1 50.3 L35.6 50.7 M27.1 50.3 L32.3 53.6 M27.1 50.3 L25.7 54.5 M35.6 50.7 L44.8 46.7 M35.6 50.7 L43.7 57.8 M35.6 50.7 L32.3 53.6 M44.8 46.7 L56.7 50.0 M44.8 46.7 L43.7 57.8 M56.7 50.0 L51.7 53.8 M62.2 48.6 L71.9 49.5 M62.2 48.6 L67.8 53.3 M62.2 48.6 L61.6 57.4 M71.9 49.5 L78.0 56.4 M78.9 50.0 L85.4 53.4 M91.5 49.4 L99.6 50.6 M91.5 49.4 L85.4 53.4 M99.6 50.6 L105.4 50.1 M99.6 50.6 L101.6 54.0 M99.6 50.6 L94.4 53.4 M105.4 50.1 L109.5 57.7 M121.0 49.0 L120.0 57.3 M133.6 47.4 L140.7 50.4 M133.6 47.4 L136.3 53.4 M140.7 50.4 L149.0 46.1 M140.7 50.4 L143.8 58.1 M140.7 50.4 L136.3 53.4 M149.0 46.1 L157.7 47.1 M149.0 46.1 L154.0 57.6 M149.0 46.1 L143.8 58.1 M157.7 47.1 L167.3 49.2 M157.7 47.1 L160.2 56.7 M157.7 47.1 L154.0 57.6 M167.3 49.2 L173.0 50.3 M167.3 49.2 L171.2 56.8 M167.3 49.2 L160.2 56.7 M173.0 50.3 L183.1 47.6 M173.0 50.3 L177.9 54.1 M173.0 50.3 L171.2 56.8 M183.1 47.6 L192.7 50.3 M183.1 47.6 L184.3 57.7 M183.1 47.6 L177.9 54.1 M192.7 50.3 L201.5 50.3 M192.7 50.3 L197.4 54.6 M192.7 50.3 L184.3 57.7 M201.5 50.3 L208.8 49.4 M201.5 50.3 L205.0 55.3 M201.5 50.3 L197.4 54.6 M208.8 49.4 L217.0 48.5 M208.8 49.4 L212.9 57.5 M208.8 49.4 L205.0 55.3 M217.0 48.5 L219.9 56.4 M217.0 48.5 L212.9 57.5 M2.2 55.0 L6.2 56.8 M2.2 55.0 L1.7 62.0 M2.2 55.0 L-5.7 63.2 M6.2 56.8 L16.7 56.0 M6.2 56.8 L11.4 65.2 M6.2 56.8 L1.7 62.0 M16.7 56.0 L25.7 54.5 M16.7 56.0 L19.2 64.5 M16.7 56.0 L11.4 65.2 M25.7 54.5 L32.3 53.6 M25.7 54.5 L27.4 65.6 M25.7 54.5 L19.2 64.5 M32.3 53.6 L43.7 57.8 M32.3 53.6 L36.3 61.1 M32.3 53.6 L27.4 65.6 M43.7 57.8 L51.7 53.8 M43.7 57.8 L45.1 65.3 M51.7 53.8 L61.6 57.4 M51.7 53.8 L55.8 65.1 M51.7 53.8 L45.1 65.3 M61.6 57.4 L67.8 53.3 M61.6 57.4 L55.8 65.1 M67.8 53.3 L63.5 61.2 M78.0 56.4 L83.0 61.5 M78.0 56.4 L71.2 62.9 M94.4 53.4 L101.6 54.0 M94.4 53.4 L95.6 65.5 M109.5 57.7 L115.3 65.2 M126.2 55.2 L136.3 53.4 M126.2 55.2 L129.9 64.3 M126.2 55.2 L120.9 64.9 M136.3 53.4 L143.8 58.1 M143.8 58.1 L154.0 57.6 M143.8 58.1 L146.9 61.7 M143.8 58.1 L137.6 64.5 M154.0 57.6 L160.2 56.7 M154.0 57.6 L154.7 62.3 M154.0 57.6 L146.9 61.7 M160.2 56.7 L171.2 56.8 M160.2 56.7 L164.6 65.6 M160.2 56.7 L154.7 62.3 M171.2 56.8 L177.9 54.1 M171.2 56.8 L174.5 62.5 M171.2 56.8 L164.6 65.6 M177.9 54.1 L184.3 57.7 M177.9 54.1 L185.0 61.5 M177.9 54.1 L174.5 62.5 M184.3 57.7 L197.4 54.6 M184.3 57.7 L189.6 65.4 M184.3 57.7 L185.0 61.5 M197.4 54.6 L205.0 55.3 M197.4 54.6 L201.8 64.1 M197.4 54.6 L189.6 65.4 M205.0 55.3 L212.9 57.5 M205.0 55.3 L210.4 60.9 M205.0 55.3 L201.8 64.1 M212.9 57.5 L219.9 56.4 M212.9 57.5 L218.5 64.2 M212.9 57.5 L210.4 60.9 M219.9 56.4 L218.5 64.2 M-5.7 63.2 L1.7 62.0 M-5.7 63.2 L0.6 72.3 M1.7 62.0 L11.4 65.2 M1.7 62.0 L6.3 69.1 M1.7 62.0 L0.6 72.3 M11.4 65.2 L19.2 64.5 M11.4 65.2 L14.9 70.4 M11.4 65.2 L6.3 69.1 M19.2 64.5 L27.4 65.6 M19.2 64.5 L25.5 70.8 M19.2 64.5 L14.9 70.4 M27.4 65.6 L36.3 61.1 M27.4 65.6 L33.1 71.8 M27.4 65.6 L25.5 70.8 M36.3 61.1 L45.1 65.3 M36.3 61.1 L43.9 71.8 M36.3 61.1 L33.1 71.8 M45.1 65.3 L48.4 68.8 M45.1 65.3 L43.9 71.8 M55.8 65.1 L63.5 61.2 M55.8 65.1 L48.4 68.8 M63.5 61.2 L71.2 62.9 M71.2 62.9 L68.1 69.0 M83.0 61.5 L87.7 64.9 M95.6 65.5 L95.5 69.0 M105.0 63.5 L115.3 65.2 M105.0 63.5 L101.0 73.0 M115.3 65.2 L120.9 64.9 M115.3 65.2 L117.2 72.2 M120.9 64.9 L129.9 64.3 M137.6 64.5 L146.9 61.7 M137.6 64.5 L143.3 71.7 M137.6 64.5 L135.7 68.3 M146.9 61.7 L154.7 62.3 M146.9 61.7 L152.2 68.8 M146.9 61.7 L143.3 71.7 M154.7 62.3 L164.6 65.6 M154.7 62.3 L160.6 70.4 M154.7 62.3 L152.2 68.8 M164.6 65.6 L174.5 62.5 M164.6 65.6 L169.0 70.3 M164.6 65.6 L160.6 70.4 M174.5 62.5 L185.0 61.5 M174.5 62.5 L176.4 68.2 M174.5 62.5 L169.0 70.3 M185.0 61.5 L189.6 65.4 M185.0 61.5 L188.2 71.7 M185.0 61.5 L176.4 68.2 M189.6 65.4 L201.8 64.1 M189.6 65.4 L194.8 68.6 M189.6 65.4 L188.2 71.7 M201.8 64.1 L210.4 60.9 M201.8 64.1 L202.7 70.8 M201.8 64.1 L194.8 68.6 M210.4 60.9 L218.5 64.2 M210.4 60.9 L214.2 70.5 M210.4 60.9 L202.7 70.8 M218.5 64.2 L223.1 70.7 M218.5 64.2 L214.2 70.5 M0.6 72.3 L6.3 69.1 M0.6 72.3 L4.5 78.4 M0.6 72.3 L-6.1 78.5 M6.3 69.1 L14.9 70.4 M6.3 69.1 L13.6 75.6 M6.3 69.1 L4.5 78.4 M14.9 70.4 L25.5 70.8 M14.9 70.4 L20.7 79.5 M14.9 70.4 L13.6 75.6 M25.5 70.8 L33.1 71.8 M25.5 70.8 L27.7 75.7 M25.5 70.8 L20.7 79.5 M33.1 71.8 L43.9 71.8 M33.1 71.8 L36.4 76.9 M33.1 71.8 L27.7 75.7 M43.9 71.8 L46.2 77.0 M43.9 71.8 L36.4 76.9 M48.4 68.8 L55.7 76.3 M48.4 68.8 L46.2 77.0 M57.8 69.2 L68.1 69.0 M57.8 69.2 L62.7 78.8 M57.8 69.2 L55.7 76.3 M84.1 71.6 L88.2 78.1 M95.5 69.0 L88.2 78.1 M117.2 72.2 L114.4 76.0 M128.4 72.7 L135.7 68.3 M128.4 72.7 L124.9 78.4 M135.7 68.3 L143.3 71.7 M143.3 71.7 L152.2 68.8 M143.3 71.7 L146.3 79.6 M143.3 71.7 L141.1 78.4 M152.2 68.8 L160.6 70.4 M152.2 68.8 L158.9 75.9 M152.2 68.8 L146.3 79.6 M160.6 70.4 L169.0 70.3 M160.6 70.4 L167.7 79.4 M160.6 70.4 L158.9 75.9 M169.0 70.3 L176.4 68.2 M169.0 70.3 L174.5 78.2 M169.0 70.3 L167.7 79.4 M176.4 68.2 L188.2 71.7 M176.4 68.2 L181.3 75.7 M176.4 68.2 L174.5 78.2 M188.2 71.7 L194.8 68.6 M188.2 71.7 L190.9 79.8 M188.2 71.7 L181.3 75.7 M194.8 68.6 L202.7 70.8 M194.8 68.6 L198.0 77.8 M194.8 68.6 L190.9 79.8 M202.7 70.8 L214.2 70.5 M202.7 70.8 L206.9 78.9 M202.7 70.8 L198.0 77.8 M214.2 70.5 L223.1 70.7 M214.2 70.5 L218.8 79.9 M214.2 70.5 L206.9 78.9 M223.1 70.7 L218.8 79.9 M-6.1 78.5 L4.5 78.4 M-6.1 78.5 L-1.3 84.9 M4.5 78.4 L13.6 75.6 M4.5 78.4 L5.8 85.5 M4.5 78.4 L-1.3 84.9 M13.6 75.6 L20.7 79.5 M13.6 75.6 L18.5 87.1 M13.6 75.6 L5.8 85.5 M20.7 79.5 L27.7 75.7 M20.7 79.5 L23.1 85.0 M20.7 79.5 L18.5 87.1 M27.7 75.7 L36.4 76.9 M27.7 75.7 L31.7 85.0 M27.7 75.7 L23.1 85.0 M36.4 76.9 L44.3 84.3 M46.2 77.0 L44.3 84.3 M55.7 76.3 L62.7 78.8 M55.7 76.3 L60.8 83.9 M62.7 78.8 L72.2 80.2 M72.2 80.2 L82.7 76.7 M72.2 80.2 L78.7 82.9 M72.2 80.2 L69.8 87.5 M88.2 78.1 L93.3 85.0 M97.7 77.3 L107.8 76.4 M124.9 78.4 L133.9 76.2 M124.9 78.4 L128.2 83.2 M133.9 76.2 L135.4 83.5 M133.9 76.2 L128.2 83.2 M141.1 78.4 L146.3 79.6 M141.1 78.4 L135.4 83.5 M146.3 79.6 L158.9 75.9 M146.3 79.6 L142.3 86.7 M158.9 75.9 L167.7 79.4 M158.9 75.9 L160.1 85.8 M158.9 75.9 L151.9 84.5 M167.7 79.4 L174.5 78.2 M167.7 79.4 L167.8 86.1 M167.7 79.4 L160.1 85.8 M174.5 78.2 L181.3 75.7 M174.5 78.2 L176.1 87.6 M174.5 78.2 L167.8 86.1 M181.3 75.7 L190.9 79.8 M181.3 75.7 L185.0 86.7 M181.3 75.7 L176.1 87.6 M190.9 79.8 L198.0 77.8 M190.9 79.8 L195.5 85.0 M190.9 79.8 L185.0 86.7 M198.0 77.8 L206.9 78.9 M198.0 77.8 L202.8 84.6 M198.0 77.8 L195.5 85.0 M206.9 78.9 L218.8 79.9 M206.9 78.9 L213.5 85.5 M206.9 78.9 L202.8 84.6 M218.8 79.9 L220.9 84.1 M218.8 79.9 L213.5 85.5 M-1.3 84.9 L5.8 85.5 M-1.3 84.9 L3.9 93.5 M-1.3 84.9 L-3.9 91.1 M5.8 85.5 L18.5 87.1 M5.8 85.5 L12.7 93.1 M5.8 85.5 L3.9 93.5 M18.5 87.1 L23.1 85.0 M18.5 87.1 L21.4 91.2 M18.5 87.1 L12.7 93.1 M23.1 85.0 L31.7 85.0 M23.1 85.0 L31.8 93.7 M23.1 85.0 L21.4 91.2 M31.7 85.0 L44.3 84.3 M31.7 85.0 L39.1 95.0 M31.7 85.0 L31.8 93.7 M44.3 84.3 L46.3 91.9 M52.5 87.6 L60.8 83.9 M52.5 87.6 L46.3 91.9 M60.8 83.9 L62.5 91.8 M60.8 83.9 L54.0 91.8 M69.8 87.5 L78.7 82.9 M69.8 87.5 L70.5 92.7 M78.7 82.9 L79.5 92.1 M78.7 82.9 L70.5 92.7 M82.3 84.3 L93.3 85.0 M99.7 86.0 L111.1 86.0 M99.7 86.0 L105.1 94.4 M99.7 86.0 L99.3 94.2 M111.1 86.0 L112.9 90.7 M111.1 86.0 L105.1 94.4 M118.8 85.6 L128.2 83.2 M118.8 85.6 L125.5 90.4 M118.8 85.6 L112.9 90.7 M128.2 83.2 L129.0 94.6 M128.2 83.2 L125.5 90.4 M135.4 83.5 L142.3 86.7 M135.4 83.5 L137.5 93.5 M135.4 83.5 L129.0 94.6 M142.3 86.7 L151.9 84.5 M142.3 86.7 L148.8 91.4 M142.3 86.7 L137.5 93.5 M151.9 84.5 L160.1 85.8 M151.9 84.5 L155.7 95.1 M151.9 84.5 L148.8 91.4 M160.1 85.8 L167.8 86.1 M160.1 85.8 L165.0 91.4 M160.1 85.8 L155.7 95.1 M167.8 86.1 L176.1 87.6 M167.8 86.1 L173.7 93.9 M167.8 86.1 L165.0 91.4 M176.1 87.6 L185.0 86.7 M176.1 87.6 L181.5 90.7 M176.1 87.6 L173.7 93.9 M185.0 86.7 L195.5 85.0 M185.0 86.7 L192.5 90.7 M185.0 86.7 L181.5 90.7 M195.5 85.0 L202.8 84.6 M195.5 85.0 L197.3 90.3 M195.5 85.0 L192.5 90.7 M202.8 84.6 L213.5 85.5 M202.8 84.6 L210.5 92.4 M202.8 84.6 L197.3 90.3 M213.5 85.5 L220.9 84.1 M213.5 85.5 L217.7 93.0 M213.5 85.5 L210.5 92.4 M220.9 84.1 L217.7 93.0 M-3.9 91.1 L3.9 93.5 M-3.9 91.1 L2.1 99.4 M3.9 93.5 L12.7 93.1 M3.9 93.5 L7.5 101.0 M3.9 93.5 L2.1 99.4 M12.7 93.1 L21.4 91.2 M12.7 93.1 L14.3 99.5 M12.7 93.1 L7.5 101.0 M21.4 91.2 L31.8 93.7 M21.4 91.2 L26.5 100.5 M21.4 91.2 L14.3 99.5 M31.8 93.7 L39.1 95.0 M31.8 93.7 L33.7 102.3 M31.8 93.7 L26.5 100.5 M39.1 95.0 L46.3 91.9 M39.1 95.0 L33.7 102.3 M46.3 91.9 L54.0 91.8 M46.3 91.9 L50.2 98.1 M46.3 91.9 L41.9 101.3 M54.0 91.8 L62.5 91.8 M54.0 91.8 L58.7 98.7 M54.0 91.8 L50.2 98.1 M62.5 91.8 L58.7 98.7 M70.5 92.7 L79.5 92.1 M70.5 92.7 L74.4 99.9 M70.5 92.7 L65.4 99.1 M79.5 92.1 L89.8 91.8 M79.5 92.1 L74.4 99.9 M89.8 91.8 L95.2 99.2 M89.8 91.8 L85.9 101.4 M99.3 94.2 L95.2 99.2 M105.1 94.4 L102.6 102.1 M112.9 90.7 L125.5 90.4 M112.9 90.7 L109.7 102.2 M125.5 90.4 L129.0 94.6 M125.5 90.4 L129.2 102.5 M125.5 90.4 L116.8 102.2 M129.0 94.6 L137.5 93.5 M137.5 93.5 L148.8 91.4 M137.5 93.5 L143.9 101.2 M137.5 93.5 L137.4 101.2 M148.8 91.4 L155.7 95.1 M148.8 91.4 L154.6 100.5 M155.7 95.1 L165.0 91.4 M155.7 95.1 L161.9 102.3 M155.7 95.1 L154.6 100.5 M165.0 91.4 L173.7 93.9 M165.0 91.4 L168.7 99.3 M165.0 91.4 L161.9 102.3 M173.7 93.9 L181.5 90.7 M173.7 93.9 L175.9 102.0 M173.7 93.9 L168.7 99.3 M181.5 90.7 L192.5 90.7 M181.5 90.7 L187.4 101.0 M181.5 90.7 L175.9 102.0 M192.5 90.7 L197.3 90.3 M192.5 90.7 L193.9 98.6 M192.5 90.7 L187.4 101.0 M197.3 90.3 L210.5 92.4 M197.3 90.3 L203.6 102.0 M197.3 90.3 L193.9 98.6 M210.5 92.4 L217.7 93.0 M210.5 92.4 L211.5 99.7 M210.5 92.4 L203.6 102.0 M217.7 93.0 L220.3 101.9 M217.7 93.0 L211.5 99.7 M2.1 99.4 L7.5 101.0 M2.1 99.4 L1.6 108.5 M2.1 99.4 L-6.4 109.4 M7.5 101.0 L14.3 99.5 M7.5 101.0 L13.8 107.4 M7.5 101.0 L1.6 108.5 M14.3 99.5 L26.5 100.5 M14.3 99.5 L22.2 106.4 M14.3 99.5 L13.8 107.4 M26.5 100.5 L33.7 102.3 M26.5 100.5 L27.7 106.8 M26.5 100.5 L22.2 106.4 M33.7 102.3 L41.9 101.3 M33.7 102.3 L36.8 108.6 M33.7 102.3 L27.7 106.8 M41.9 101.3 L50.2 98.1 M41.9 101.3 L46.8 108.3 M41.9 101.3 L36.8 108.6 M50.2 98.1 L57.4 108.9 M50.2 98.1 L46.8 108.3 M58.7 98.7 L65.4 99.1 M58.7 98.7 L65.0 109.9 M58.7 98.7 L57.4 108.9 M65.4 99.1 L74.4 99.9 M65.4 99.1 L74.1 108.7 M74.4 99.9 L85.9 101.4 M74.4 99.9 L74.1 108.7 M85.9 101.4 L90.3 109.0 M85.9 101.4 L79.7 107.6 M95.2 99.2 L102.6 102.1 M95.2 99.2 L90.3 109.0 M102.6 102.1 L109.7 102.2 M102.6 102.1 L106.8 106.3 M102.6 102.1 L99.5 108.7 M109.7 102.2 L115.1 106.0 M109.7 102.2 L106.8 106.3 M116.8 102.2 L129.2 102.5 M116.8 102.2 L123.7 105.9 M116.8 102.2 L115.1 106.0 M129.2 102.5 L137.4 101.2 M129.2 102.5 L129.1 109.8 M129.2 102.5 L123.7 105.9 M137.4 101.2 L143.9 101.2 M137.4 101.2 L141.8 106.6 M137.4 101.2 L129.1 109.8 M143.9 101.2 L154.6 100.5 M143.9 101.2 L146.2 109.1 M143.9 101.2 L141.8 106.6 M154.6 100.5 L161.9 102.3 M154.6 100.5 L158.4 105.8 M154.6 100.5 L146.2 109.1 M161.9 102.3 L168.7 99.3 M161.9 102.3 L167.1 109.2 M161.9 102.3 L158.4 105.8 M168.7 99.3 L175.9 102.0 M168.7 99.3 L174.4 106.4 M168.7 99.3 L167.1 109.2 M175.9 102.0 L187.4 101.0 M175.9 102.0 L180.3 105.3 M175.9 102.0 L174.4 106.4 M187.4 101.0 L193.9 98.6 M187.4 101.0 L190.7 108.6 M187.4 101.0 L180.3 105.3 M193.9 98.6 L203.6 102.0 M193.9 98.6 L200.2 106.2 M193.9 98.6 L190.7 108.6 M203.6 102.0 L211.5 99.7 M203.6 102.0 L209.5 105.3 M203.6 102.0 L200.2 106.2 M211.5 99.7 L220.3 101.9 M211.5 99.7 L217.1 105.9 M211.5 99.7 L209.5 105.3 M220.3 101.9 L217.1 105.9 M-6.4 109.4 L1.6 108.5 M-6.4 109.4 L-2.7 113.4 M1.6 108.5 L13.8 107.4 M1.6 108.5 L9.7 113.5 M1.6 108.5 L-2.7 113.4 M13.8 107.4 L22.2 106.4 M13.8 107.4 L14.3 114.8 M13.8 107.4 L9.7 113.5 M22.2 106.4 L27.7 106.8 M22.2 106.4 L24.5 115.3 M22.2 106.4 L14.3 114.8 M27.7 106.8 L36.8 108.6 M27.7 106.8 L34.1 116.0 M27.7 106.8 L24.5 115.3 M36.8 108.6 L46.8 108.3 M36.8 108.6 L44.3 114.1 M36.8 108.6 L34.1 116.0 M46.8 108.3 L57.4 108.9 M46.8 108.3 L51.4 113.0 M46.8 108.3 L44.3 114.1 M57.4 108.9 L65.0 109.9 M57.4 108.9 L58.0 112.9 M57.4 108.9 L51.4 113.0 M65.0 109.9 L74.1 108.7 M65.0 109.9 L69.6 114.1 M65.0 109.9 L58.0 112.9 M74.1 108.7 L79.7 107.6 M74.1 108.7 L69.6 114.1 M79.7 107.6 L90.3 109.0 M79.7 107.6 L84.2 113.5 M79.7 107.6 L77.3 116.8 M90.3 109.0 L99.5 108.7 M90.3 109.0 L92.0 114.9 M99.5 108.7 L106.8 106.3 M99.5 108.7 L92.0 114.9 M106.8 106.3 L115.1 106.0 M106.8 106.3 L112.0 115.6 M106.8 106.3 L101.2 112.8 M115.1 106.0 L123.7 105.9 M115.1 106.0 L120.6 116.7 M115.1 106.0 L112.0 115.6 M123.7 105.9 L129.1 109.8 M123.7 105.9 L120.6 116.7 M129.1 109.8 L141.8 106.6 M129.1 109.8 L136.8 114.6 M129.1 109.8 L128.4 116.5 M141.8 106.6 L146.2 109.1 M141.8 106.6 L145.8 117.0 M141.8 106.6 L136.8 114.6 M146.2 109.1 L158.4 105.8 M146.2 109.1 L150.8 113.1 M146.2 109.1 L145.8 117.0 M158.4 105.8 L167.1 109.2 M158.4 105.8 L159.6 114.7 M158.4 105.8 L150.8 113.1 M167.1 109.2 L174.4 106.4 M167.1 109.2 L171.6 115.1 M167.1 109.2 L159.6 114.7 M174.4 106.4 L180.3 105.3 M174.4 106.4 L180.0 114.3 M174.4 106.4 L171.6 115.1 M180.3 105.3 L190.7 108.6 M180.3 105.3 L187.1 113.7 M180.3 105.3 L180.0 114.3 M190.7 108.6 L200.2 106.2 M190.7 108.6 L196.0 113.8 M190.7 108.6 L187.1 113.7 M200.2 106.2 L209.5 105.3 M200.2 106.2 L201.3 114.4 M200.2 106.2 L196.0 113.8 M209.5 105.3 L217.1 105.9 M209.5 105.3 L212.6 116.8 M209.5 105.3 L201.3 114.4 M217.1 105.9 L219.7 117.1 M217.1 105.9 L212.6 116.8 M-2.7 113.4 L9.7 113.5 M-2.7 113.4 L5.4 124.5 M-2.7 113.4 L-2.9 120.6 M9.7 113.5 L14.3 114.8 M9.7 113.5 L14.8 123.3 M9.7 113.5 L5.4 124.5 M14.3 114.8 L24.5 115.3 M14.3 114.8 L20.5 122.5 M14.3 114.8 L14.8 123.3 M24.5 115.3 L34.1 116.0 M24.5 115.3 L30.3 122.9 M24.5 115.3 L20.5 122.5 M34.1 116.0 L44.3 114.1 M34.1 116.0 L36.4 124.2 M34.1 116.0 L30.3 122.9 M44.3 114.1 L51.4 113.0 M44.3 114.1 L46.7 120.2 M44.3 114.1 L36.4 124.2 M51.4 113.0 L58.0 112.9 M51.4 113.0 L54.0 120.2 M51.4 113.0 L46.7 120.2 M58.0 112.9 L69.6 114.1 M58.0 112.9 L63.3 120.3 M58.0 112.9 L54.0 120.2 M69.6 114.1 L77.3 116.8 M69.6 114.1 L72.1 121.2 M69.6 114.1 L63.3 120.3 M77.3 116.8 L84.2 113.5 M77.3 116.8 L82.1 123.7 M77.3 116.8 L72.1 121.2 M84.2 113.5 L92.0 114.9 M84.2 113.5 L87.4 123.9 M84.2 113.5 L82.1 123.7 M92.0 114.9 L101.2 112.8 M92.0 114.9 L97.9 121.2 M92.0 114.9 L87.4 123.9 M101.2 112.8 L112.0 115.6 M101.2 112.8 L97.9 121.2 M112.0 115.6 L120.6 116.7 M112.0 115.6 L114.0 122.8 M112.0 115.6 L108.1 119.9 M120.6 116.7 L128.4 116.5 M120.6 116.7 L121.3 122.3 M120.6 116.7 L114.0 122.8 M128.4 116.5 L136.8 114.6 M128.4 116.5 L133.4 121.5 M128.4 116.5 L121.3 122.3 M136.8 114.6 L145.8 117.0 M136.8 114.6 L141.0 120.8 M136.8 114.6 L133.4 121.5 M145.8 117.0 L150.8 113.1 M145.8 117.0 L150.9 124.6 M145.8 117.0 L141.0 120.8 M150.8 113.1 L159.6 114.7 M150.8 113.1 L155.3 123.6 M150.8 113.1 L150.9 124.6 M159.6 114.7 L171.6 115.1 M159.6 114.7 L164.7 120.0 M159.6 114.7 L155.3 123.6 M171.6 115.1 L180.0 114.3 M171.6 115.1 L172.6 123.5 M171.6 115.1 L164.7 120.0 M180.0 114.3 L187.1 113.7 M180.0 114.3 L182.3 122.5 M180.0 114.3 L172.6 123.5 M187.1 113.7 L196.0 113.8 M187.1 113.7 L189.1 120.7 M187.1 113.7 L182.3 122.5 M196.0 113.8 L201.3 114.4 M196.0 113.8 L198.8 122.4 M196.0 113.8 L189.1 120.7 M201.3 114.4 L212.6 116.8 M201.3 114.4 L209.6 122.1 M201.3 114.4 L198.8 122.4 M212.6 116.8 L219.7 117.1 M212.6 116.8 L215.6 124.4 M212.6 116.8 L209.6 122.1 M219.7 117.1 L215.6 124.4 M-2.9 120.6 L5.4 124.5 M-2.9 120.6 L0.7 131.0 M5.4 124.5 L14.8 123.3 M5.4 124.5 L9.8 129.6 M5.4 124.5 L0.7 131.0 M14.8 123.3 L20.5 122.5 M14.8 123.3 L15.6 127.8 M14.8 123.3 L9.8 129.6 M20.5 122.5 L30.3 122.9 M20.5 122.5 L26.0 131.0 M20.5 122.5 L15.6 127.8 M30.3 122.9 L36.4 124.2 M30.3 122.9 L35.8 131.8 M30.3 122.9 L26.0 131.0 M36.4 124.2 L46.7 120.2 M36.4 124.2 L42.3 129.7 M36.4 124.2 L35.8 131.8 M46.7 120.2 L54.0 120.2 M46.7 120.2 L53.1 127.6 M46.7 120.2 L42.3 129.7 M54.0 120.2 L63.3 120.3 M54.0 120.2 L58.6 129.9 M54.0 120.2 L53.1 127.6 M63.3 120.3 L72.1 121.2 M63.3 120.3 L68.3 130.3 M63.3 120.3 L58.6 129.9 M72.1 121.2 L82.1 123.7 M72.1 121.2 L74.5 129.8 M72.1 121.2 L68.3 130.3 M82.1 123.7 L87.4 123.9 M82.1 123.7 L83.1 129.1 M82.1 123.7 L74.5 129.8 M87.4 123.9 L97.9 121.2 M87.4 123.9 L91.6 128.8 M87.4 123.9 L83.1 129.1 M97.9 121.2 L108.1 119.9 M97.9 121.2 L102.4 129.2 M97.9 121.2 L91.6 128.8 M108.1 119.9 L114.0 122.8 M108.1 119.9 L108.6 129.6 M108.1 119.9 L102.4 129.2 M114.0 122.8 L121.3 122.3 M114.0 122.8 L119.6 128.7 M114.0 122.8 L108.6 129.6 M121.3 122.3 L133.4 121.5 M121.3 122.3 L126.1 129.4 M121.3 122.3 L119.6 128.7 M133.4 121.5 L141.0 120.8 M133.4 121.5 L136.7 127.4 M133.4 121.5 L126.1 129.4 M141.0 120.8 L150.9 124.6 M141.0 120.8 L145.1 127.5 M141.0 120.8 L136.7 127.4 M150.9 124.6 L155.3 123.6 M150.9 124.6 L154.7 128.2 M150.9 124.6 L145.1 127.5 M155.3 123.6 L164.7 120.0 M155.3 123.6 L162.9 127.4 M155.3 123.6 L154.7 128.2 M164.7 120.0 L172.6 123.5 M164.7 120.0 L169.7 128.5 M164.7 120.0 L162.9 127.4 M172.6 123.5 L182.3 122.5 M172.6 123.5 L179.6 131.1 M172.6 123.5 L169.7 128.5 M182.3 122.5 L189.1 120.7 M182.3 122.5 L184.9 127.5 M182.3 122.5 L179.6 131.1 M189.1 120.7 L198.8 122.4 M189.1 120.7 L196.4 129.3 M189.1 120.7 L184.9 127.5 M198.8 122.4 L209.6 122.1 M198.8 122.4 L203.1 129.0 M198.8 122.4 L196.4 129.3 M209.6 122.1 L215.6 124.4 M209.6 122.1 L211.6 130.1 M209.6 122.1 L203.1 129.0 M215.6 124.4 L220.2 127.9 M215.6 124.4 L211.6 130.1 M0.7 131.0 L9.8 129.6 M0.7 131.0 L5.3 138.2 M0.7 131.0 L-4.6 139.6 M9.8 129.6 L15.6 127.8 M9.8 129.6 L14.6 136.8 M9.8 129.6 L5.3 138.2 M15.6 127.8 L26.0 131.0 M15.6 127.8 L20.3 138.6 M15.6 127.8 L14.6 136.8 M26.0 131.0 L35.8 131.8 M26.0 131.0 L27.5 138.4 M26.0 131.0 L20.3 138.6 M35.8 131.8 L42.3 129.7 M35.8 131.8 L36.2 137.7 M35.8 131.8 L27.5 138.4 M42.3 129.7 L53.1 127.6 M42.3 129.7 L46.6 138.5 M42.3 129.7 L36.2 137.7 M53.1 127.6 L58.6 129.9 M53.1 127.6 L52.8 138.0 M53.1 127.6 L46.6 138.5 M58.6 129.9 L68.3 130.3 M58.6 129.9 L65.1 134.8 M58.6 129.9 L52.8 138.0 M68.3 130.3 L74.5 129.8 M68.3 130.3 L72.9 136.0 M68.3 130.3 L65.1 134.8 M74.5 129.8 L83.1 129.1 M74.5 129.8 L81.7 139.5 M74.5 129.8 L72.9 136.0 M83.1 129.1 L91.6 128.8 M83.1 129.1 L86.5 136.6 M83.1 129.1 L81.7 139.5 M91.6 128.8 L102.4 129.2 M91.6 128.8 L97.5 139.5 M91.6 128.8 L86.5 136.6 M102.4 129.2 L108.6 129.6 M102.4 129.2 L108.1 134.8 M102.4 129.2 L97.5 139.5 M108.6 129.6 L119.6 128.7 M108.6 129.6 L112.7 136.6 M108.6 129.6 L108.1 134.8 M119.6 128.7 L126.1 129.4 M119.6 128.7 L124.5 138.6 M119.6 128.7 L112.7 136.6 M126.1 129.4 L136.7 127.4 M126.1 129.4 L131.8 139.2 M126.1 129.4 L124.5 138.6 M136.7 127.4 L145.1 127.5 M136.7 127.4 L141.6 139.0 M136.7 127.4 L131.8 139.2 M145.1 127.5 L154.7 128.2 M145.1 127.5 L149.2 135.9 M145.1 127.5 L141.6 139.0 M154.7 128.2 L162.9 127.4 M154.7 128.2 L158.2 138.2 M154.7 128.2 L149.2 135.9 M162.9 127.4 L169.7 128.5 M162.9 127.4 L167.6 135.5 M162.9 127.4 L158.2 138.2 M169.7 128.5 L179.6 131.1 M169.7 128.5 L171.6 136.3 M169.7 128.5 L167.6 135.5 M179.6 131.1 L184.9 127.5 M179.6 131.1 L181.3 136.5 M179.6 131.1 L171.6 136.3 M184.9 127.5 L196.4 129.3 M184.9 127.5 L188.8 137.7 M184.9 127.5 L181.3 136.5 M196.4 129.3 L203.1 129.0 M196.4 129.3 L199.1 135.9 M196.4 129.3 L188.8 137.7 M203.1 129.0 L211.6 130.1 M203.1 129.0 L206.0 137.5 M203.1 129.0 L199.1 135.9 M211.6 130.1 L220.2 127.9 M211.6 130.1 L214.5 138.9 M211.6 130.1 L206.0 137.5 M220.2 127.9 L214.5 138.9 M-4.6 139.6 L5.3 138.2 M-4.6 139.6 L-1.4 146.5 M5.3 138.2 L14.6 136.8 M5.3 138.2 L6.4 144.0 M5.3 138.2 L-1.4 146.5 M14.6 136.8 L20.3 138.6 M14.6 136.8 L18.1 144.6 M14.6 136.8 L6.4 144.0 M20.3 138.6 L27.5 138.4 M20.3 138.6 L25.0 146.4 M20.3 138.6 L18.1 144.6 M27.5 138.4 L36.2 137.7 M27.5 138.4 L32.1 146.3 M27.5 138.4 L25.0 146.4 M36.2 137.7 L46.6 138.5 M36.2 137.7 L42.3 143.4 M36.2 137.7 L32.1 146.3 M46.6 138.5 L52.8 138.0 M46.6 138.5 L50.0 143.4 M46.6 138.5 L42.3 143.4 M52.8 138.0 L65.1 134.8 M52.8 138.0 L59.9 144.2 M52.8 138.0 L50.0 143.4 M65.1 134.8 L72.9 136.0 M65.1 134.8 L67.8 145.3 M65.1 134.8 L59.9 144.2 M72.9 136.0 L81.7 139.5 M72.9 136.0 L78.0 145.5 M72.9 136.0 L67.8 145.3 M81.7 139.5 L86.5 136.6 M81.7 139.5 L83.7 145.3 M81.7 139.5 L78.0 145.5 M86.5 136.6 L97.5 139.5 M86.5 136.6 L94.2 146.5 M86.5 136.6 L83.7 145.3 M97.5 139.5 L108.1 134.8 M97.5 139.5 L101.2 144.7 M97.5 139.5 L94.2 146.5 M108.1 134.8 L112.7 136.6 M108.1 134.8 L111.5 143.7 M108.1 134.8 L101.2 144.7 M112.7 136.6 L124.5 138.6 M112.7 136.6 L117.9 145.1 M112.7 136.6 L111.5 143.7 M124.5 138.6 L131.8 139.2 M124.5 138.6 L126.6 146.2 M124.5 138.6 L117.9 145.1 M131.8 139.2 L141.6 139.0 M131.8 139.2 L135.0 143.1 M131.8 139.2 L126.6 146.2 M141.6 139.0 L149.2 135.9 M141.6 139.0 L144.8 145.0 M141.6 139.0 L135.0 143.1 M149.2 135.9 L158.2 138.2 M149.2 135.9 L155.2 146.7 M149.2 135.9 L144.8 145.0 M158.2 138.2 L167.6 135.5 M158.2 138.2 L160.9 144.2 M158.2 138.2 L155.2 146.7 M167.6 135.5 L171.6 136.3 M167.6 135.5 L170.5 144.5 M167.6 135.5 L160.9 144.2 M171.6 136.3 L181.3 136.5 M171.6 136.3 L178.7 144.0 M171.6 136.3 L170.5 144.5 M181.3 136.5 L188.8 137.7 M181.3 136.5 L188.5 146.5 M181.3 136.5 L178.7 144.0 M188.8 137.7 L199.1 135.9 M188.8 137.7 L196.7 145.8 M188.8 137.7 L188.5 146.5 M199.1 135.9 L206.0 137.5 M199.1 135.9 L205.7 143.3 M199.1 135.9 L196.7 145.8 M206.0 137.5 L214.5 138.9 M206.0 137.5 L214.5 143.0 M206.0 137.5 L205.7 143.3 M214.5 138.9 L218.8 144.5 M214.5 138.9 L214.5 143.0 M-1.4 146.5 L6.4 144.0 M6.4 144.0 L18.1 144.6 M18.1 144.6 L25.0 146.4 M25.0 146.4 L32.1 146.3 M32.1 146.3 L42.3 143.4 M42.3 143.4 L50.0 143.4 M50.0 143.4 L59.9 144.2 M59.9 144.2 L67.8 145.3 M67.8 145.3 L78.0 145.5 M78.0 145.5 L83.7 145.3 M83.7 145.3 L94.2 146.5 M94.2 146.5 L101.2 144.7 M101.2 144.7 L111.5 143.7 M111.5 143.7 L117.9 145.1 M117.9 145.1 L126.6 146.2 M126.6 146.2 L135.0 143.1 M135.0 143.1 L144.8 145.0 M144.8 145.0 L155.2 146.7 M155.2 146.7 L160.9 144.2 M160.9 144.2 L170.5 144.5 M170.5 144.5 L178.7 144.0 M178.7 144.0 L188.5 146.5 M188.5 146.5 L196.7 145.8 M196.7 145.8 L205.7 143.3 M205.7 143.3 L214.5 143.0 M214.5 143.0 L218.8 144.5 M161.2 63.4 L167.5 54.9 M76.2 39.7 L84.7 33.4 M145.9 53.1 L165.6 44.8 M136.7 52.6 L145.6 34.1 M163.5 18.2 L163.4 7.8 M20.9 19.6 L9.0 30.4 M154.0 42.6 L170.6 41.5 M50.1 11.0 L58.5 -0.4 M127.6 59.3 L136.3 74.5 M64.2 89.8 L50.9 105.3 M34.5 29.3 L40.6 16.1 M115.2 22.0 L100.2 9.1 M88.8 28.8 L94.8 11.1 M81.3 116.2 L97.4 128.5 M10.9 89.5 L-3.1 87.9 M145.9 104.1 L162.0 115.0 M28.8 59.4 L25.2 45.1 M160.9 67.8 L174.1 57.2 M178.2 112.9 L177.9 127.8 M49.0 61.6 L40.6 44.9 M166.2 63.7 L185.8 59.1 M170.8 108.4 L181.9 99.8 M155.7 57.3 L163.0 40.5 M49.7 113.0 L50.4 123.4 M165.6 120.4 L172.7 129.0 M98.9 20.4 L108.3 10.5 M29.9 27.0 L12.0 20.4 M140.3 54.2 L156.5 64.4 M182.3 98.5 L181.6 117.8 M182.0 22.2 L179.4 0.9 M44.0 9.9 L32.1 -2.9 M119.7 24.4 L138.8 25.1 M14.8 79.4 L2.5 72.6 M17.9 126.5 L18.9 143.5 M140.9 101.7 L138.3 121.3 M145.9 104.3 L145.7 114.9 M21.8 22.5 L8.9 14.9 M24.7 87.1 L6.5 82.3 M110.0 126.5 L112.4 146.6 M79.7 22.6 L67.3 13.2 M68.7 118.7 L74.2 131.1 M91.7 116.9 L105.6 124.3 M102.3 101.5 L118.4 104.8 M140.2 30.3 L146.2 21.9 M12.1 36.9 L1.5 40.2 M155.2 79.8 L164.5 98.2 M17.0 88.0 L12.7 99.5 M142.1 47.3 L151.2 36.3 M58.0 14.7 L70.7 2.6 M60.5 39.2 L48.5 22.9 M29.6 67.6 L20.2 78.3 M26.6 120.9 L27.2 132.7 M137.4 90.1 L154.3 88.5 M161.8 33.2 L161.8 14.0 M49.0 120.1 L35.6 121.8 M159.0 52.7 L167.0 71.8 M28.3 120.1 L19.0 113.8 M87.6 110.6 L76.1 121.3 M150.2 56.8 L151.4 37.1 M177.4 108.6 L196.4 116.5 M64.8 37.6 L47.0 26.1 M112.7 64.1 L120.1 55.5 M76.7 23.0 L64.2 9.5 M76.3 99.0 L92.4 110.5 M53.6 90.9 L40.2 76.8 M146.7 44.5 L150.1 28.4 M178.4 52.9 L186.5 45.7 M127.5 108.8 L143.8 117.1 M163.9 65.4 L169.4 55.9 M118.2 39.5 L111.9 24.9 M106.0 65.9 L120.2 64.9 M109.7 35.4 L102.6 24.5 M151.2 11.9 L149.8 -8.0 M180.9 37.3 L194.8 32.5 M22.9 125.8 L11.2 119.3 M39.4 113.7 L41.2 131.3 M159.3 21.4 L170.8 19.5 M66.8 11.7 L47.4 1.8 M57.3 8.9 L54.7 -12.8 M46.4 23.0 L34.0 12.3 M18.3 115.0 L16.0 133.3 M176.5 86.8 L186.1 77.5 M157.4 15.3 L169.3 1.8 M179.5 119.7 L181.1 137.4 M48.7 104.5 L28.5 106.2 M148.2 16.7 L163.9 15.8 M176.7 94.2 L186.3 100.9 M54.6 116.6 L32.9 117.6 M179.3 103.0 L191.7 103.3 M59.6 117.2 L67.4 124.9 M39.5 108.7 L30.0 112.7 M127.7 69.9 L147.4 64.0 M134.8 38.5 L147.9 22.9 M117.5 100.5 L135.0 96.6 M12.8 68.0 L-8.7 69.8 M23.4 104.4 L7.9 111.5 M43.7 105.8 L30.2 100.6 M149.3 125.3 L142.5 144.8 M31.9 81.5 L20.0 71.3 M145.6 72.7 L153.7 63.6 M104.2 37.7 L125.4 33.8 M167.0 43.0 L184.8 39.0 M70.6 122.6 L60.2 121.8 M164.2 119.9 L180.6 110.9 M138.5 114.4 L152.8 118.5 M96.8 121.0 L77.0 127.7 M84.6 19.7 L92.4 12.6 M21.1 54.7 L12.4 64.8 M176.1 91.4 L194.7 101.5 M119.4 110.5 L140.5 109.5 M12.1 30.0 L10.0 18.3 M52.7 103.5 L56.0 121.8 M175.9 78.5 L191.7 78.6 M81.4 100.7 L70.2 113.8 M41.1 82.1 L34.5 90.0 M41.4 31.4 L30.7 30.8 M121.0 55.0 L132.4 43.4 M165.9 56.5 L175.4 50.4 M124.0 54.6 L134.6 71.6 M38.9 118.9 L19.3 113.2 M118.8 127.9 L137.1 131.7 M17.4 110.0 L1.1 116.3 M157.4 105.5 L176.1 107.5 M162.0 13.6 L181.8 8.0 M27.1 94.9 L11.2 88.4 M25.6 66.5 L11.6 82.5 M28.8 84.6 L9.6 84.4 M182.8 107.7 L186.8 127.3 M82.3 15.8 L72.3 9.1 M37.1 119.8 L38.2 138.7 M170.8 99.5 L178.7 119.2 M101.1 21.4 L99.9 4.5 M101.8 114.3 L115.9 130.6 M138.3 68.8 L145.3 59.6 M112.1 106.0 L122.2 116.7 M20.3 55.9 L7.8 43.6 M23.6 72.8 L16.5 59.0 M124.2 127.8 L137.0 128.2 M34.0 69.0 L22.5 61.8 M28.6 119.4 L12.9 106.1 M129.7 127.2 L149.8 124.5 M181.6 38.0 L198.4 51.2 M135.9 10.3 L152.7 6.1 M19.1 90.6 L14.4 108.5 M28.3 94.6 L14.3 102.1 M20.7 50.0 L3.3 54.7 M39.7 106.9 L39.5 124.1 M161.6 42.0 L171.7 47.2 M47.5 13.9 L36.4 11.1 M97.1 92.0 L95.8 104.0 M170.7 51.8 L182.5 44.4 M181.0 66.8 L191.9 79.3 M34.4 121.1 L28.8 133.1 M91.2 18.1 L95.0 6.5 M167.0 72.6 L172.9 92.9 M121.3 53.4 L140.0 54.6 M39.0 112.1 L32.0 127.7 M87.3 16.2 L100.9 9.2 M181.0 86.0 L180.9 100.5 M152.8 105.9 L149.6 118.7 M89.5 110.0 L83.8 130.5 M142.7 18.1 L135.8 1.1 M26.3 46.2 L5.4 51.2 M32.1 101.7 L15.9 112.6 M10.3 97.2 L4.1 105.7 M162.9 27.2 L180.1 24.5 M120.0 18.3 L129.9 13.2 M167.7 107.2 L178.6 97.1 M53.8 51.5 L35.1 60.6 M35.9 117.1 L15.7 114.7 M92.4 14.6 L78.2 5.1 M125.1 80.1 L142.2 74.5 M117.0 12.8 L101.6 -1.5 M45.8 49.7 L42.1 38.3 M70.8 35.6 L61.0 28.0 M160.4 42.9 L164.0 25.9 M148.8 15.6 L149.4 4.3 M157.9 68.3 L163.3 78.5 M157.4 117.4 L168.0 125.4 M57.6 58.8 L53.1 46.0 M158.5 104.9 L171.9 97.0 M174.7 32.7 L186.1 26.1 M66.8 43.9 L51.7 41.6 M161.2 101.2 L178.8 89.5 M97.7 31.9 L109.2 22.8 M181.7 38.6 L200.1 37.8 M106.4 34.7 L121.2 39.0 M89.0 16.9 L82.0 -3.8 M152.8 111.5 L172.1 119.5 M117.0 106.1 L130.7 110.2 M150.7 94.3 L166.6 108.9 M21.4 122.3 L12.5 130.9 M154.9 10.3 L152.8 -1.2 M162.1 104.8 L180.3 94.1 M64.0 113.8 L48.4 112.6 M184.1 32.8 L191.8 21.1 M129.2 112.4 L136.9 130.7 M37.7 74.5 L27.4 72.0 M137.2 127.8 L150.3 127.5 M52.3 19.7 L41.7 7.0 M75.8 51.0 L60.4 57.7 M103.7 128.0 L103.7 149.7 M101.1 8.8 L115.8 2.0 M74.9 100.8 L77.3 113.4 M108.3 102.9 L114.6 117.8 M83.6 18.2 L92.1 12.8 M69.6 88.4 L70.6 104.6 M173.3 22.0 L184.1 28.1 M109.7 119.1 L127.4 126.8 M138.3 24.8 L157.7 31.9 M178.0 57.4 L183.2 44.1 M15.8 60.8 L9.3 41.4 M130.9 43.3 L147.3 43.0 M154.3 78.1 L158.3 88.5 M52.1 30.8 L38.2 19.4 M26.8 31.1 L15.3 40.4 M157.3 68.8 L168.7 74.5 M110.0 69.5 L122.9 52.1 M33.8 123.8 L37.2 136.5 M161.2 9.7 L164.0 -8.5" stroke="#0a0a0a" stroke-width="0.5" fill="none"/>
<path d="M-4.4 -5.5 L-0.1 -7.4 L-0.2 -3.2 Z M5.1 4.9 L1.0 2.5 L4.6 0.2 Z M-1.4 -8.4 L0.5 -4.1 L-3.7 -4.3 Z M17.7 -3.3 L13.2 -2.0 L13.9 -6.1 Z M6.2 -7.4 L10.3 -5.1 L6.8 -2.7 Z M13.2 -6.1 L17.2 -3.6 L13.7 -1.4 Z M52.3 -5.8 L48.4 -3.2 L47.8 -7.3 Z M41.7 -7.5 L44.7 -4.0 L40.7 -2.9 Z M50.6 -7.8 L50.2 -3.1 L46.6 -5.2 Z M55.4 -1.1 L59.4 -3.4 L59.7 0.7 Z M64.5 5.5 L60.0 4.0 L63.0 1.0 Z M80.4 -5.9 L77.2 -2.5 L75.8 -6.4 Z M74.7 -6.0 L79.4 -6.6 L78.0 -2.6 Z M79.4 -6.8 L78.3 -2.3 L75.0 -5.0 Z M76.6 7.2 L77.3 2.6 L80.8 5.1 Z M100.8 -6.6 L105.5 -7.0 L103.9 -3.1 Z M97.8 8.4 L97.5 3.7 L101.4 5.4 Z M118.0 -7.3 L121.3 -4.0 L117.4 -2.7 Z M133.1 7.8 L129.4 4.8 L133.3 3.1 Z M135.0 -0.3 L138.1 -3.9 L139.7 -0.1 Z M139.9 5.9 L136.8 2.4 L140.8 1.3 Z M157.4 -2.7 L153.0 -1.2 L153.5 -5.3 Z M146.3 -6.6 L145.3 -2.0 L142.0 -4.7 Z M154.3 -5.8 L157.1 -2.0 L153.0 -1.3 Z M157.1 -4.9 L155.1 -0.6 L152.5 -3.9 Z M154.7 8.3 L155.8 3.8 L159.0 6.5 Z M171.9 -6.1 L170.5 -1.6 L167.5 -4.5 Z M185.6 5.6 L181.4 3.5 L184.8 1.0 Z M169.6 4.2 L171.4 -0.2 L174.2 3.0 Z M199.2 -5.9 L195.3 -3.4 L194.8 -7.6 Z M195.6 -8.0 L199.4 -5.3 L195.7 -3.3 Z M198.7 -2.6 L202.8 -4.9 L203.0 -0.7 Z M201.3 -6.0 L203.6 -1.9 L199.5 -1.7 Z M215.9 5.2 L212.0 2.5 L215.6 0.5 Z M222.6 -6.2 L221.2 -1.7 L218.1 -4.7 Z M-3.1 -0.4 L0.4 2.8 L-3.6 4.3 Z M0.8 2.4 L5.1 0.5 L4.9 4.7 Z M-0.5 12.5 L-0.9 7.8 L3.0 9.4 Z M23.2 6.2 L18.6 6.9 L19.9 2.9 Z M16.0 16.3 L13.1 12.7 L17.2 11.8 Z M31.5 4.0 L27.6 6.5 L27.1 2.3 Z M42.4 1.5 L38.7 4.4 L37.9 0.3 Z M26.6 2.3 L31.1 3.8 L28.1 6.8 Z M45.9 13.6 L42.1 10.8 L45.9 8.9 Z M44.2 -0.3 L46.5 3.8 L42.3 4.0 Z M65.4 2.4 L61.8 5.4 L60.8 1.3 Z M57.2 14.2 L54.8 10.2 L58.9 9.8 Z M47.4 12.8 L49.1 8.5 L51.9 11.5 Z M59.2 2.9 L63.6 1.2 L63.3 5.3 Z M67.5 15.7 L63.9 12.6 L67.8 11.0 Z M79.7 13.2 L75.3 11.7 L78.3 8.8 Z M71.4 1.3 L71.7 6.0 L67.9 4.4 Z M93.2 6.5 L88.9 8.2 L89.3 4.0 Z M76.2 2.5 L80.5 4.4 L77.2 7.1 Z M93.5 5.1 L90.6 8.8 L88.8 4.9 Z M101.2 16.3 L98.1 12.7 L102.2 11.7 Z M101.4 4.8 L98.7 8.7 L96.7 5.0 Z M119.0 5.8 L114.5 7.1 L115.2 2.9 Z M115.2 2.8 L119.2 5.2 L115.7 7.5 Z M123.5 3.0 L124.3 7.6 L120.3 6.4 Z M129.3 6.9 L132.3 3.2 L134.0 7.0 Z M139.6 14.4 L135.3 12.5 L138.5 9.8 Z M151.0 2.1 L146.9 4.3 L146.8 0.1 Z M137.4 14.9 L135.9 10.4 L140.0 11.0 Z M158.9 15.4 L158.6 10.7 L162.5 12.3 Z M171.8 16.0 L169.6 11.8 L173.8 11.8 Z M204.3 3.9 L199.8 5.5 L200.4 1.3 Z M188.5 0.0 L192.7 2.2 L189.3 4.6 Z M215.0 -0.0 L215.8 4.6 L211.8 3.4 Z M6.4 19.1 L2.4 16.6 L6.0 14.4 Z M16.7 18.4 L12.1 17.8 L14.4 14.3 Z M6.7 8.0 L7.8 12.6 L3.7 11.7 Z M12.6 14.7 L16.1 11.5 L17.3 15.5 Z M16.7 10.3 L17.3 15.0 L13.4 13.7 Z M25.2 18.8 L27.2 14.6 L29.8 17.8 Z M43.9 8.7 L47.1 12.1 L43.1 13.4 Z M46.3 9.1 L45.5 13.7 L42.1 11.2 Z M47.3 23.6 L45.9 19.1 L50.1 19.8 Z M67.5 9.8 L68.4 14.4 L64.3 13.2 Z M83.2 22.7 L79.5 19.8 L83.3 18.0 Z M79.6 10.2 L83.8 8.0 L83.9 12.2 Z M80.8 8.5 L85.2 10.0 L82.2 12.9 Z M92.3 7.1 L93.9 11.5 L89.7 11.1 Z M111.0 7.9 L108.2 11.6 L106.3 7.9 Z M117.7 21.9 L113.6 19.7 L117.0 17.3 Z M106.3 20.8 L105.0 16.2 L109.2 17.0 Z M123.7 21.9 L120.5 18.4 L124.6 17.3 Z M126.8 10.5 L131.2 9.0 L130.6 13.2 Z M121.2 20.9 L122.3 16.4 L125.5 19.1 Z M134.8 12.0 L139.1 10.1 L138.8 14.3 Z M136.6 9.3 L140.1 12.3 L136.2 14.0 Z M155.5 8.1 L152.6 11.8 L150.8 7.9 Z M144.0 10.2 L148.1 12.4 L144.7 14.8 Z M174.2 13.6 L169.9 15.6 L170.0 11.4 Z M162.0 10.9 L160.6 15.4 L157.6 12.5 Z M173.8 11.2 L172.6 15.7 L169.5 12.9 Z M190.8 12.1 L186.6 14.2 L186.6 10.0 Z M186.6 18.4 L182.0 17.8 L184.3 14.3 Z M199.7 11.3 L195.7 13.7 L195.4 9.5 Z M190.4 9.7 L189.2 14.2 L186.1 11.4 Z M193.8 11.2 L198.2 9.6 L197.8 13.7 Z M202.6 20.4 L198.6 18.0 L202.1 15.8 Z M214.2 14.1 L209.7 15.4 L210.5 11.3 Z M14.1 14.4 L16.9 18.2 L12.7 18.9 Z M41.1 19.6 L36.6 20.9 L37.3 16.8 Z M37.5 26.3 L33.0 25.1 L35.8 22.0 Z M37.9 16.4 L41.1 19.8 L37.1 21.0 Z M34.1 27.5 L34.3 22.8 L38.0 24.8 Z M45.3 22.8 L47.3 18.6 L49.9 21.9 Z M51.5 30.6 L48.0 27.4 L51.9 25.9 Z M49.6 18.9 L48.3 23.4 L45.2 20.5 Z M51.2 16.3 L55.4 14.2 L55.4 18.4 Z M52.8 14.1 L56.2 17.4 L52.2 18.7 Z M66.3 27.4 L64.0 23.4 L68.1 23.1 Z M66.8 14.6 L66.1 19.3 L62.7 16.9 Z M84.7 21.3 L80.0 21.6 L81.6 17.8 Z M79.2 20.6 L83.1 17.9 L83.6 22.1 Z M102.2 16.7 L98.5 19.6 L97.7 15.5 Z M96.3 26.4 L92.1 24.3 L95.5 21.8 Z M83.6 30.4 L84.1 25.7 L87.6 28.0 Z M92.5 26.0 L93.4 21.4 L96.7 24.1 Z M105.9 15.4 L109.3 18.6 L105.4 20.0 Z M108.4 15.8 L107.7 20.4 L104.2 18.0 Z M126.0 18.3 L122.3 21.2 L121.5 17.0 Z M120.4 27.1 L116.5 24.5 L120.2 22.4 Z M122.0 16.3 L125.3 19.6 L121.3 21.0 Z M116.6 26.5 L117.7 22.0 L120.9 24.6 Z M126.7 16.0 L131.2 14.7 L130.4 18.9 Z M125.3 30.3 L124.4 25.6 L128.5 26.8 Z M147.0 20.2 L150.5 17.1 L151.6 21.2 Z M169.3 19.1 L164.9 20.9 L165.2 16.7 Z M153.1 29.6 L151.8 25.1 L155.9 25.8 Z M170.4 30.9 L167.2 27.4 L171.2 26.2 Z M169.4 21.1 L172.8 17.9 L174.0 21.9 Z M183.2 14.3 L186.7 17.4 L182.8 19.0 Z M185.3 14.8 L184.9 19.5 L181.3 17.3 Z M188.5 18.3 L192.6 16.0 L192.8 20.2 Z M192.2 15.5 L192.7 20.2 L188.8 18.8 Z M197.6 17.3 L202.1 15.9 L201.5 20.1 Z M199.6 15.3 L203.4 18.0 L199.7 20.0 Z M204.3 19.1 L208.2 16.4 L208.8 20.5 Z M220.5 14.6 L219.6 19.2 L216.3 16.6 Z M-4.3 25.2 L0.3 26.0 L-2.2 29.4 Z M19.5 28.8 L14.9 29.7 L16.0 25.7 Z M13.7 26.1 L18.4 26.8 L16.0 30.2 Z M29.5 38.1 L26.6 34.4 L30.7 33.6 Z M35.4 21.9 L37.9 26.0 L33.7 26.3 Z M36.8 22.7 L36.5 27.4 L32.9 25.3 Z M54.5 34.2 L50.5 31.8 L54.0 29.5 Z M55.7 26.4 L60.2 27.6 L57.4 30.7 Z M64.9 22.6 L69.0 24.8 L65.5 27.2 Z M74.2 23.4 L78.7 24.9 L75.7 27.8 Z M91.4 36.0 L87.1 34.1 L90.4 31.4 Z M86.8 25.2 L86.4 29.8 L82.8 27.7 Z M103.7 27.6 L99.0 27.9 L100.6 24.1 Z M109.2 24.3 L112.5 27.6 L108.6 29.0 Z M106.4 38.6 L105.7 34.0 L109.7 35.3 Z M124.9 37.0 L121.2 34.1 L125.0 32.3 Z M124.2 25.8 L128.5 27.7 L125.3 30.4 Z M126.9 24.9 L127.7 29.6 L123.7 28.3 Z M132.6 27.7 L136.7 25.3 L136.9 29.5 Z M136.1 24.8 L136.6 29.4 L132.6 27.9 Z M146.1 23.8 L148.9 27.5 L144.8 28.3 Z M148.3 25.0 L147.1 29.5 L143.9 26.8 Z M172.4 28.2 L168.2 30.3 L168.2 26.1 Z M161.0 25.1 L162.2 29.6 L158.1 28.8 Z M166.5 28.3 L170.7 26.1 L170.8 30.3 Z M190.7 26.5 L186.8 29.0 L186.3 24.9 Z M186.8 37.4 L182.4 35.9 L185.3 32.9 Z M171.4 36.8 L172.0 32.1 L175.5 34.5 Z M189.3 35.5 L189.3 30.8 L193.0 32.7 Z M202.1 25.9 L206.0 23.2 L206.6 27.4 Z M203.8 22.5 L207.4 25.5 L203.5 27.2 Z M206.6 22.9 L206.3 27.6 L202.7 25.5 Z M209.7 24.3 L213.9 22.3 L213.9 26.5 Z M-5.8 31.7 L-1.4 30.0 L-1.8 34.2 Z M-3.9 29.5 L-0.4 32.7 L-4.4 34.2 Z M16.0 32.8 L11.9 34.9 L11.8 30.7 Z M7.4 30.7 L7.0 35.3 L3.4 33.1 Z M11.1 30.4 L15.3 32.6 L11.8 35.0 Z M14.0 30.7 L14.0 35.3 L10.2 33.4 Z M21.3 29.1 L23.9 33.1 L19.7 33.6 Z M23.0 29.0 L22.8 33.7 L19.1 31.7 Z M48.4 32.1 L44.6 34.9 L43.9 30.8 Z M44.9 42.0 L40.4 40.8 L43.2 37.6 Z M36.1 46.0 L34.1 41.7 L38.3 41.8 Z M42.6 33.2 L46.3 30.3 L47.1 34.4 Z M62.7 35.3 L66.9 33.1 L66.9 37.3 Z M70.9 36.0 L74.2 32.6 L75.6 36.6 Z M72.8 31.7 L75.7 35.4 L71.6 36.2 Z M74.9 32.5 L74.8 37.2 L71.1 35.2 Z M79.7 31.1 L84.3 30.1 L83.2 34.2 Z M86.6 32.8 L91.2 31.9 L90.2 35.9 Z M88.8 30.8 L91.8 34.4 L87.7 35.4 Z M82.5 45.4 L82.8 40.7 L86.4 42.8 Z M110.1 36.0 L105.9 38.0 L105.9 33.8 Z M89.6 44.5 L91.0 40.0 L94.0 42.9 Z M115.8 33.4 L112.4 36.6 L111.2 32.6 Z M104.7 34.0 L109.3 34.8 L106.8 38.2 Z M116.5 41.4 L118.2 37.0 L121.0 40.2 Z M142.2 35.9 L137.8 37.7 L138.1 33.6 Z M150.8 33.6 L147.1 36.4 L146.3 32.3 Z M137.9 33.0 L141.4 36.1 L137.5 37.6 Z M161.5 34.7 L157.2 36.6 L157.4 32.4 Z M152.8 45.5 L149.2 42.4 L153.1 40.8 Z M161.7 31.6 L166.3 30.5 L165.4 34.6 Z M163.4 30.2 L167.3 32.9 L163.6 34.9 Z M161.7 44.7 L160.6 40.2 L164.6 41.1 Z M170.7 33.9 L175.2 32.3 L174.7 36.5 Z M178.4 44.5 L179.2 39.8 L182.6 42.4 Z M186.0 44.5 L185.6 39.9 L189.5 41.4 Z M197.9 33.2 L201.6 30.2 L202.5 34.4 Z M199.9 29.6 L203.4 32.7 L199.5 34.3 Z M202.4 30.1 L202.2 34.8 L198.5 32.8 Z M217.8 34.8 L213.1 35.4 L214.5 31.4 Z M206.2 29.1 L210.3 31.5 L206.8 33.8 Z M213.6 44.0 L212.0 39.6 L216.2 40.1 Z M-0.3 38.7 L3.1 42.0 L-0.9 43.4 Z M-4.3 49.9 L-3.9 45.2 L-0.3 47.4 Z M21.4 50.6 L18.0 47.4 L22.0 46.0 Z M20.9 43.4 L25.0 41.2 L25.1 45.4 Z M18.7 50.9 L19.0 46.2 L22.7 48.3 Z M46.1 38.8 L50.8 38.3 L49.4 42.2 Z M47.3 38.0 L51.6 40.0 L48.3 42.6 Z M66.8 44.0 L69.4 40.1 L71.5 43.8 Z M72.0 38.7 L76.6 38.2 L75.1 42.2 Z M94.6 42.1 L90.6 44.6 L90.2 40.5 Z M77.2 52.4 L77.9 47.8 L81.4 50.2 Z M89.1 42.7 L93.0 40.2 L93.5 44.3 Z M103.5 38.6 L104.2 43.3 L100.2 42.0 Z M122.1 39.0 L118.1 41.4 L117.7 37.2 Z M111.5 37.2 L115.0 40.4 L111.1 41.9 Z M121.6 51.6 L118.7 48.0 L122.8 47.1 Z M115.4 51.4 L114.6 46.8 L118.6 47.9 Z M144.6 45.0 L139.9 44.6 L142.1 41.0 Z M151.9 47.1 L147.2 47.6 L148.7 43.7 Z M167.8 43.6 L171.7 41.0 L172.2 45.1 Z M165.8 52.0 L165.9 47.3 L169.6 49.3 Z M178.6 39.2 L182.4 41.9 L178.7 43.9 Z M181.8 40.1 L180.7 44.7 L177.5 41.9 Z M202.8 52.6 L198.9 50.0 L202.5 47.9 Z M216.6 41.3 L212.1 42.7 L212.8 38.6 Z M202.6 37.0 L206.4 39.8 L202.6 41.7 Z M204.3 36.8 L205.5 41.3 L201.4 40.5 Z M210.7 42.0 L214.0 38.7 L215.3 42.6 Z M219.1 36.6 L220.4 41.0 L216.3 40.3 Z M4.2 46.0 L5.3 50.6 L1.2 49.7 Z M11.0 47.3 L15.4 45.5 L15.1 49.7 Z M15.5 58.6 L15.4 53.9 L19.2 55.7 Z M29.6 56.0 L31.4 51.6 L34.1 54.8 Z M42.5 46.0 L47.1 45.1 L46.0 49.2 Z M45.0 44.1 L46.7 48.5 L42.5 48.1 Z M62.3 45.8 L64.2 50.1 L60.0 49.8 Z M102.5 51.0 L98.1 52.5 L98.7 48.3 Z M108.7 49.9 L104.7 52.3 L104.4 48.1 Z M97.8 47.5 L101.7 50.0 L98.1 52.1 Z M91.5 55.0 L94.2 51.2 L96.2 54.8 Z M143.5 51.5 L138.9 51.9 L140.5 48.0 Z M151.5 44.8 L148.7 48.6 L146.8 44.8 Z M139.7 47.6 L143.1 50.8 L139.2 52.3 Z M133.5 55.4 L135.7 51.2 L138.1 54.7 Z M146.1 45.7 L150.6 44.1 L150.0 48.3 Z M142.9 60.2 L142.7 55.5 L146.5 57.2 Z M161.0 59.3 L157.8 55.8 L161.9 54.7 Z M158.5 44.7 L159.1 49.4 L155.1 48.0 Z M164.0 48.5 L168.6 47.3 L167.7 51.4 Z M172.5 59.4 L168.7 56.6 L172.5 54.7 Z M170.5 48.3 L175.1 49.3 L172.5 52.6 Z M170.3 59.9 L169.5 55.2 L173.5 56.4 Z M204.3 50.3 L200.2 52.4 L200.1 48.2 Z M211.9 49.0 L208.0 51.6 L207.4 47.4 Z M203.7 47.9 L202.4 52.4 L199.3 49.5 Z M220.0 48.2 L216.0 50.7 L215.6 46.5 Z M210.5 46.7 L210.0 51.4 L206.5 49.1 Z M211.7 59.9 L211.6 55.2 L215.4 57.0 Z M-1.0 53.6 L3.7 53.4 L1.9 57.2 Z M12.9 67.5 L8.9 65.1 L12.4 62.9 Z M-0.4 64.4 L0.7 59.8 L3.9 62.6 Z M35.4 53.2 L31.6 55.8 L31.0 51.7 Z M45.9 58.6 L41.2 59.2 L42.7 55.2 Z M33.1 51.5 L33.5 56.2 L29.6 54.6 Z M43.1 54.8 L45.9 58.6 L41.8 59.3 Z M69.1 50.8 L69.0 55.5 L65.3 53.5 Z M69.2 64.9 L70.8 60.4 L73.7 63.5 Z M127.5 53.0 L127.3 57.7 L123.6 55.6 Z M156.7 57.4 L152.6 59.8 L152.4 55.6 Z M163.5 56.3 L159.6 58.9 L159.0 54.8 Z M156.6 56.1 L154.0 60.0 L151.9 56.4 Z M165.8 68.0 L162.1 65.2 L165.9 63.3 Z M180.8 53.0 L177.7 56.5 L176.2 52.6 Z M176.2 65.3 L172.2 62.7 L175.8 60.6 Z M175.2 52.6 L179.9 52.8 L177.9 56.5 Z M176.1 52.2 L180.5 53.8 L177.5 56.7 Z M173.5 65.1 L173.1 60.4 L177.0 62.0 Z M183.8 54.1 L186.5 57.9 L182.4 58.6 Z M208.1 55.6 L203.7 57.3 L204.1 53.1 Z M188.3 67.2 L189.1 62.6 L192.4 65.1 Z M2.0 74.4 L-2.1 72.1 L1.4 69.7 Z M14.0 66.1 L9.3 66.7 L10.6 62.8 Z M7.9 71.5 L3.8 69.1 L7.3 66.8 Z M16.2 64.0 L20.7 62.5 L20.1 66.7 Z M17.1 62.4 L21.6 63.9 L18.6 66.9 Z M25.0 66.8 L27.8 63.0 L29.7 66.8 Z M28.6 62.4 L29.1 67.1 L25.2 65.6 Z M32.3 74.2 L31.5 69.6 L35.6 70.8 Z M66.1 59.9 L63.3 63.7 L61.4 59.9 Z M66.7 71.9 L66.7 67.2 L70.5 69.1 Z M117.9 65.6 L113.4 67.0 L114.1 62.9 Z M111.9 65.4 L116.0 63.1 L116.3 67.2 Z M118.0 75.2 L114.9 71.7 L118.9 70.6 Z M151.1 71.7 L150.6 67.0 L154.5 68.5 Z M187.6 61.3 L183.6 63.8 L183.2 59.6 Z M184.2 59.0 L187.4 62.4 L183.4 63.7 Z M201.3 60.9 L204.0 64.8 L199.8 65.4 Z M220.2 61.7 L219.6 66.3 L216.1 63.9 Z M9.1 67.5 L6.5 71.4 L4.4 67.7 Z M6.2 81.1 L2.1 78.6 L5.7 76.4 Z M15.7 77.4 L11.1 76.2 L13.9 73.0 Z M28.1 70.8 L23.8 72.8 L24.0 68.6 Z M24.1 67.7 L27.7 70.6 L23.9 72.4 Z M25.1 77.5 L27.3 73.4 L29.7 76.8 Z M57.5 78.2 L53.1 76.6 L56.1 73.7 Z M55.2 69.3 L59.3 67.1 L59.4 71.3 Z M63.9 81.1 L60.1 78.3 L63.9 76.4 Z M58.8 66.3 L59.5 70.9 L55.5 69.7 Z M119.3 69.4 L118.5 74.0 L115.1 71.5 Z M125.9 74.3 L128.4 70.3 L130.6 73.9 Z M133.0 67.0 L137.7 66.9 L136.0 70.7 Z M154.9 67.9 L151.5 71.2 L150.2 67.2 Z M144.3 68.7 L144.9 73.3 L141.0 72.0 Z M160.7 77.9 L156.3 76.2 L159.4 73.4 Z M157.9 79.0 L157.1 74.4 L161.1 75.7 Z M167.3 82.2 L165.8 77.7 L170.0 78.3 Z M174.9 65.8 L178.9 68.2 L175.4 70.5 Z M176.9 65.6 L178.2 70.1 L174.1 69.3 Z M193.9 66.0 L197.3 69.3 L193.3 70.7 Z M216.7 70.4 L212.6 72.6 L212.4 68.4 Z M226.0 70.8 L221.7 72.8 L221.8 68.6 Z M219.9 82.3 L216.2 79.4 L220.0 77.6 Z M205.3 80.8 L206.4 76.3 L209.6 79.0 Z M16.3 74.7 L12.9 78.0 L11.6 74.0 Z M3.9 75.4 L6.8 79.1 L2.6 79.9 Z M19.4 76.4 L23.0 79.4 L19.1 81.1 Z M39.3 77.3 L34.8 78.8 L35.4 74.6 Z M46.9 74.0 L47.9 78.6 L43.9 77.6 Z M52.8 75.3 L57.4 74.7 L56.0 78.7 Z M60.0 78.4 L64.5 77.0 L63.8 81.1 Z M68.9 90.4 L68.2 85.7 L72.2 87.0 Z M110.5 76.2 L106.5 78.7 L106.1 74.5 Z M136.0 86.5 L133.1 82.8 L137.3 82.0 Z M135.7 74.0 L134.7 78.5 L131.5 75.9 Z M133.2 85.6 L134.9 81.2 L137.7 84.3 Z M158.5 73.2 L161.1 77.1 L157.0 77.6 Z M150.3 86.5 L151.3 81.9 L154.6 84.6 Z M167.9 89.2 L165.7 85.1 L169.9 85.0 Z M184.3 74.7 L181.0 78.1 L179.6 74.1 Z M176.2 76.1 L175.1 80.7 L171.9 78.0 Z M178.9 74.7 L183.6 74.4 L181.9 78.3 Z M180.5 73.4 L183.9 76.7 L179.9 78.1 Z M175.2 89.7 L175.0 85.0 L178.8 86.7 Z M195.2 77.5 L199.6 75.9 L199.1 80.1 Z M215.5 87.4 L211.1 86.0 L214.0 83.0 Z M200.9 87.2 L201.7 82.6 L205.1 85.0 Z M-2.7 82.6 L1.3 85.1 L-2.3 87.3 Z M-5.1 94.0 L-5.4 89.4 L-1.6 91.0 Z M20.8 87.3 L16.3 88.9 L16.9 84.7 Z M26.3 83.6 L23.3 87.2 L21.6 83.4 Z M10.7 95.3 L12.1 90.8 L15.1 93.7 Z M33.5 95.3 L29.0 93.8 L32.0 90.9 Z M43.6 81.3 L46.6 84.9 L42.6 85.9 Z M63.4 82.7 L60.4 86.3 L58.7 82.5 Z M55.0 85.9 L52.7 90.0 L50.4 86.5 Z M60.2 80.9 L63.1 84.6 L59.0 85.5 Z M52.3 93.8 L53.4 89.3 L56.6 92.0 Z M97.2 86.1 L101.4 83.9 L101.4 88.1 Z M106.6 96.7 L102.6 94.3 L106.1 92.0 Z M114.1 93.9 L110.7 90.8 L114.6 89.3 Z M110.6 92.7 L112.4 88.4 L115.1 91.5 Z M129.2 97.1 L126.8 93.0 L131.0 92.7 Z M129.3 80.3 L129.8 85.0 L125.8 83.5 Z M134.9 80.9 L137.8 84.6 L133.7 85.4 Z M139.8 84.9 L144.5 85.7 L142.0 89.1 Z M156.6 97.4 L153.2 94.2 L157.1 92.8 Z M157.1 85.7 L161.4 83.7 L161.2 87.9 Z M158.1 83.4 L162.5 85.3 L159.3 88.0 Z M161.3 83.4 L161.4 88.1 L157.6 86.3 Z M179.0 88.2 L174.5 89.4 L175.3 85.3 Z M173.3 87.9 L177.2 85.4 L177.7 89.6 Z M184.3 92.3 L179.6 92.0 L181.7 88.4 Z M182.5 87.1 L186.3 84.4 L186.9 88.5 Z M195.0 92.1 L190.3 92.0 L192.3 88.3 Z M200.2 84.4 L204.5 82.7 L204.2 86.9 Z M224.0 83.5 L220.2 86.4 L219.4 82.2 Z M212.1 82.9 L216.0 85.6 L212.3 87.6 Z M209.2 95.2 L209.0 90.5 L212.8 92.2 Z M6.8 94.4 L2.1 95.1 L3.4 91.1 Z M-5.4 88.9 L-1.3 91.1 L-4.7 93.6 Z M15.6 93.0 L11.5 95.3 L11.3 91.1 Z M4.9 90.4 L5.7 95.0 L1.6 93.8 Z M24.2 90.6 L20.5 93.5 L19.6 89.5 Z M12.0 90.0 L15.0 93.6 L10.9 94.6 Z M12.6 101.4 L13.7 96.8 L16.9 99.6 Z M33.6 91.4 L32.7 96.0 L29.3 93.4 Z M49.0 90.7 L46.0 94.3 L44.3 90.4 Z M32.0 104.6 L32.8 100.0 L36.2 102.5 Z M44.6 89.3 L48.6 91.7 L45.1 94.0 Z M82.3 91.9 L78.3 94.3 L78.0 90.1 Z M75.8 102.5 L71.9 99.8 L75.7 97.8 Z M63.5 101.4 L64.5 96.8 L67.8 99.4 Z M110.6 90.8 L114.7 88.6 L114.8 92.8 Z M145.6 103.3 L141.3 101.4 L144.6 98.7 Z M153.2 96.1 L156.3 92.6 L157.9 96.5 Z M163.7 104.4 L159.3 102.5 L162.5 99.8 Z M176.4 94.7 L171.8 95.6 L173.0 91.5 Z M184.2 89.6 L181.1 93.1 L179.5 89.2 Z M180.2 88.6 L184.2 91.2 L180.5 93.3 Z M193.5 88.5 L193.6 93.2 L189.8 91.3 Z M195.1 89.9 L199.6 88.5 L198.9 92.7 Z M204.7 103.9 L200.8 101.3 L204.5 99.3 Z M198.3 87.6 L198.7 92.3 L194.8 90.7 Z M212.0 102.8 L209.3 98.9 L213.4 98.3 Z M219.6 90.9 L218.3 95.5 L215.2 92.6 Z M10.7 102.1 L6.1 102.8 L7.3 98.8 Z M1.4 111.3 L-0.5 107.0 L3.7 107.3 Z M-7.8 111.1 L-6.7 106.5 L-3.5 109.2 Z M13.7 110.4 L11.8 106.1 L16.0 106.3 Z M44.8 100.9 L40.9 103.5 L40.4 99.4 Z M38.2 111.4 L34.5 108.6 L38.2 106.7 Z M36.2 100.5 L34.1 104.7 L31.5 101.3 Z M52.9 97.0 L49.7 100.5 L48.2 96.6 Z M43.5 98.9 L42.9 103.6 L39.4 101.2 Z M51.0 95.6 L51.7 100.3 L47.7 98.9 Z M84.5 98.9 L88.4 101.5 L84.8 103.6 Z M96.3 96.9 L96.3 101.6 L92.6 99.7 Z M112.9 102.3 L108.6 104.3 L108.7 100.1 Z M100.3 99.8 L104.7 101.2 L101.8 104.2 Z M103.9 99.3 L104.0 104.0 L100.2 102.2 Z M107.1 100.4 L111.7 101.0 L109.3 104.5 Z M131.5 102.6 L127.2 104.6 L127.3 100.4 Z M126.4 107.3 L121.7 107.2 L123.7 103.5 Z M139.1 99.5 L137.7 103.9 L134.6 101.0 Z M151.6 99.8 L156.2 98.7 L155.2 102.8 Z M144.6 110.8 L146.0 106.4 L149.0 109.3 Z M166.9 97.1 L171.2 99.1 L167.9 101.7 Z M184.4 102.1 L187.6 98.7 L189.1 102.6 Z M189.9 99.5 L187.4 103.4 L185.2 99.9 Z M201.9 108.3 L197.6 106.3 L200.9 103.7 Z M205.8 99.4 L204.7 104.0 L201.5 101.3 Z M223.1 102.5 L218.5 103.6 L219.5 99.5 Z M222.5 99.2 L221.5 103.8 L218.2 101.1 Z M31.1 107.1 L26.7 108.9 L27.0 104.7 Z M25.2 118.0 L22.1 114.5 L26.2 113.4 Z M12.6 116.6 L14.0 112.1 L17.0 115.0 Z M26.3 104.8 L30.4 107.0 L27.0 109.4 Z M46.6 115.8 L42.0 115.0 L44.4 111.6 Z M37.9 105.8 L38.4 110.4 L34.5 109.0 Z M60.0 109.0 L55.7 110.9 L55.9 106.7 Z M43.0 117.1 L42.8 112.4 L46.6 114.1 Z M58.6 116.5 L55.8 112.6 L60.0 112.0 Z M76.9 108.4 L73.0 111.0 L72.5 106.8 Z M62.6 107.7 L67.1 109.0 L64.2 112.1 Z M83.0 106.9 L79.3 109.8 L78.5 105.7 Z M67.5 116.5 L68.7 111.9 L71.8 114.7 Z M77.2 107.2 L81.6 105.7 L81.0 109.9 Z M86.0 115.9 L81.8 113.8 L85.2 111.3 Z M76.6 119.5 L75.6 114.9 L79.7 116.0 Z M102.3 108.7 L98.2 110.9 L98.1 106.7 Z M109.7 105.3 L106.4 108.7 L105.1 104.7 Z M101.6 107.0 L99.7 111.3 L97.0 108.0 Z M113.3 117.9 L109.4 115.2 L113.1 113.2 Z M108.8 104.1 L107.6 108.7 L104.4 105.9 Z M131.7 111.7 L127.0 110.9 L129.5 107.5 Z M124.4 103.5 L125.3 108.1 L121.2 106.9 Z M144.0 106.0 L140.5 109.1 L139.4 105.0 Z M146.7 119.4 L143.3 116.2 L147.2 114.7 Z M143.3 104.2 L142.9 108.9 L139.3 106.6 Z M146.4 106.1 L148.3 110.4 L144.1 110.2 Z M158.0 103.0 L160.6 106.8 L156.5 107.4 Z M164.3 110.3 L167.4 106.8 L168.9 110.8 Z M173.5 117.5 L169.2 115.5 L172.6 112.9 Z M157.3 116.4 L159.5 112.2 L162.0 115.6 Z M181.6 116.5 L177.5 114.3 L180.9 111.9 Z M175.2 103.7 L175.9 108.3 L172.0 107.1 Z M177.8 104.6 L182.5 103.8 L181.2 107.8 Z M188.7 115.7 L184.4 113.7 L187.7 111.1 Z M179.9 117.1 L178.0 112.9 L182.2 113.0 Z M201.7 117.3 L199.0 113.5 L203.2 112.9 Z M201.6 103.6 L201.4 108.3 L197.7 106.3 Z M206.4 105.1 L210.8 103.3 L210.5 107.5 Z M199.7 116.2 L201.0 111.6 L204.1 114.5 Z M216.5 103.5 L219.5 107.1 L215.4 108.1 Z M-3.0 123.7 L-5.0 119.5 L-0.8 119.6 Z M17.7 115.8 L13.1 116.7 L14.2 112.6 Z M8.6 111.3 L12.4 114.0 L8.6 116.0 Z M11.7 114.7 L15.9 112.8 L15.8 117.0 Z M14.2 111.9 L16.5 116.0 L12.3 116.2 Z M36.9 116.2 L32.5 118.0 L32.8 113.8 Z M19.0 125.1 L19.2 120.4 L22.9 122.5 Z M31.5 116.4 L35.3 113.6 L36.0 117.8 Z M37.2 127.0 L34.1 123.6 L38.1 122.4 Z M28.8 125.5 L29.0 120.8 L32.7 122.9 Z M61.2 112.9 L57.1 115.0 L57.0 110.8 Z M50.4 110.1 L53.8 113.4 L49.8 114.8 Z M56.4 110.6 L60.5 112.8 L57.1 115.2 Z M52.6 122.8 L52.8 118.1 L56.5 120.1 Z M80.1 117.8 L75.5 118.4 L76.8 114.4 Z M68.5 111.2 L71.9 114.5 L68.0 115.9 Z M75.6 114.4 L79.7 116.6 L76.3 119.0 Z M79.7 114.7 L77.9 119.1 L75.2 115.9 Z M81.6 126.3 L80.4 121.7 L84.5 122.5 Z M103.9 112.2 L100.3 115.1 L99.3 111.0 Z M96.9 123.8 L96.4 119.1 L100.4 120.7 Z M123.5 117.0 L119.1 118.6 L119.6 114.4 Z M121.7 125.6 L119.1 121.7 L123.3 121.2 Z M122.7 114.7 L121.0 119.1 L118.2 116.0 Z M125.5 117.2 L129.2 114.2 L130.1 118.3 Z M142.8 123.3 L138.7 121.0 L142.1 118.6 Z M138.1 111.8 L138.2 116.5 L134.4 114.7 Z M153.4 111.1 L151.3 115.4 L148.8 112.1 Z M138.5 122.8 L140.5 118.6 L143.1 121.9 Z M168.7 115.3 L172.6 112.8 L173.0 117.0 Z M174.0 113.4 L171.8 117.5 L169.3 114.1 Z M171.0 125.3 L172.0 120.8 L175.3 123.4 Z M184.2 113.6 L188.4 111.6 L188.4 115.8 Z M186.2 110.7 L189.4 114.1 L185.4 115.3 Z M187.2 122.6 L188.7 118.2 L191.7 121.1 Z M198.9 113.9 L203.4 112.7 L202.5 116.8 Z M222.8 117.2 L218.5 119.1 L218.7 114.9 Z M221.1 114.5 L220.9 119.2 L217.2 117.1 Z M1.5 133.4 L-1.8 130.1 L2.1 128.7 Z M17.7 122.4 L22.0 120.5 L21.8 124.7 Z M19.0 120.3 L23.0 122.6 L19.5 125.0 Z M22.6 120.3 L21.2 124.8 L18.2 121.9 Z M39.6 124.9 L35.1 126.1 L36.0 122.0 Z M24.7 133.5 L24.8 128.8 L28.5 130.7 Z M34.1 125.2 L37.2 121.7 L38.8 125.6 Z M44.9 118.1 L49.3 119.9 L46.1 122.7 Z M47.8 117.8 L47.9 122.5 L44.1 120.7 Z M52.9 117.9 L56.6 120.8 L52.8 122.6 Z M54.4 117.2 L56.0 121.6 L51.8 121.1 Z M64.4 118.0 L64.5 122.7 L60.7 120.8 Z M69.6 120.6 L74.1 119.5 L73.1 123.6 Z M75.3 132.5 L72.2 129.0 L76.2 127.9 Z M73.2 118.7 L73.5 123.4 L69.6 121.7 Z M78.7 123.5 L83.0 121.6 L82.8 125.8 Z M93.7 131.3 L89.4 129.4 L92.6 126.7 Z M81.1 131.6 L82.2 127.0 L85.4 129.7 Z M96.5 118.7 L100.4 121.4 L96.7 123.4 Z M99.6 119.1 L98.6 123.6 L95.3 121.0 Z M109.4 117.7 L109.0 122.3 L105.4 120.2 Z M124.4 122.1 L120.4 124.5 L120.1 120.3 Z M111.9 120.7 L116.4 122.3 L113.3 125.1 Z M115.8 120.5 L114.8 125.1 L111.5 122.5 Z M119.7 119.9 L123.8 122.2 L120.3 124.5 Z M122.1 119.2 L123.1 123.8 L119.0 122.7 Z M138.3 130.2 L134.4 127.6 L138.1 125.5 Z M146.7 130.1 L142.7 127.6 L146.3 125.4 Z M158.8 122.9 L155.1 125.8 L154.2 121.7 Z M148.4 122.3 L152.9 123.6 L150.0 126.7 Z M167.2 119.0 L164.0 122.5 L162.5 118.6 Z M152.7 122.3 L157.4 122.3 L155.5 126.1 Z M175.2 124.6 L170.5 124.9 L172.2 121.0 Z M169.8 123.7 L173.8 121.2 L174.2 125.4 Z M174.2 120.6 L174.0 125.3 L170.3 123.2 Z M178.8 133.8 L178.0 129.2 L182.0 130.4 Z M186.5 120.2 L191.0 118.9 L190.2 123.0 Z M187.5 118.8 L191.8 120.6 L188.6 123.3 Z M196.2 122.5 L200.4 120.2 L200.5 124.4 Z M195.4 132.2 L194.8 127.6 L198.7 129.0 Z M213.0 122.4 L217.6 123.2 L215.0 126.6 Z M-2.1 131.4 L1.8 128.7 L2.4 132.9 Z M-6.1 141.8 L-5.6 137.2 L-2.1 139.4 Z M6.6 130.6 L10.0 127.4 L11.3 131.4 Z M28.5 131.7 L23.9 132.5 L25.1 128.5 Z M14.6 125.6 L18.2 128.5 L14.3 130.2 Z M25.4 128.0 L28.3 131.7 L24.2 132.5 Z M27.7 128.7 L26.9 133.4 L23.5 130.8 Z M35.5 128.5 L37.9 132.5 L33.7 132.9 Z M25.5 140.1 L27.4 135.8 L30.1 139.1 Z M39.8 130.1 L43.5 127.3 L44.3 131.4 Z M34.6 139.9 L35.5 135.3 L38.8 137.8 Z M50.0 126.4 L54.7 126.0 L53.1 129.9 Z M52.7 140.6 L50.8 136.4 L55.0 136.5 Z M54.3 125.7 L53.9 130.3 L50.3 128.2 Z M71.0 130.4 L66.7 132.3 L66.9 128.1 Z M51.2 140.2 L52.0 135.5 L55.4 138.0 Z M74.9 138.4 L70.6 136.5 L73.8 133.8 Z M75.4 126.6 L76.3 131.2 L72.3 130.2 Z M110.3 136.8 L105.8 135.4 L108.7 132.4 Z M96.4 141.8 L96.3 137.1 L100.1 138.9 Z M122.1 128.5 L118.1 130.9 L117.8 126.8 Z M139.3 126.9 L135.5 129.8 L134.7 125.6 Z M130.9 141.3 L130.6 136.6 L134.5 138.3 Z M157.5 128.4 L153.1 130.2 L153.4 126.0 Z M150.4 138.4 L146.7 135.6 L150.5 133.7 Z M145.8 125.2 L146.6 129.8 L142.6 128.6 Z M187.6 125.6 L185.3 129.7 L182.9 126.3 Z M182.2 139.7 L179.0 136.3 L183.0 135.1 Z M181.9 129.6 L179.6 133.6 L177.3 130.1 Z M206.3 128.8 L202.2 131.1 L202.0 126.9 Z M187.1 139.5 L188.4 135.0 L191.5 137.8 Z M214.5 130.5 L210.0 132.0 L210.6 127.8 Z M202.2 126.3 L205.5 129.6 L201.6 130.9 Z M213.3 127.9 L212.4 132.5 L209.1 129.9 Z M221.3 125.8 L221.2 130.5 L217.5 128.6 Z M-5.9 136.8 L-2.3 139.7 L-6.1 141.5 Z M17.4 136.4 L13.5 139.1 L12.9 135.0 Z M11.5 135.9 L16.1 135.1 L14.9 139.1 Z M13.4 134.2 L17.1 137.1 L13.2 138.9 Z M39.1 137.5 L35.1 139.9 L34.8 135.7 Z M24.1 149.2 L23.4 144.6 L27.4 145.8 Z M33.6 137.5 L37.9 135.7 L37.6 139.9 Z M30.9 148.8 L30.8 144.1 L34.6 145.9 Z M44.7 135.8 L48.8 138.0 L45.4 140.4 Z M67.4 134.2 L63.8 137.3 L62.8 133.2 Z M62.0 146.0 L57.5 144.8 L60.2 141.7 Z M66.4 132.5 L66.2 137.2 L62.5 135.2 Z M70.3 135.0 L75.0 134.6 L73.5 138.5 Z M66.6 147.5 L66.8 142.9 L70.4 144.9 Z M89.4 134.9 L86.9 138.9 L84.7 135.3 Z M80.7 136.4 L84.0 139.7 L80.0 141.1 Z M85.1 134.8 L89.3 136.8 L86.0 139.4 Z M87.4 133.9 L88.1 138.6 L84.1 137.3 Z M92.9 149.3 L92.8 144.6 L96.6 146.4 Z M109.5 132.8 L108.8 137.4 L105.4 135.0 Z M121.4 138.3 L125.8 136.6 L125.4 140.7 Z M144.3 138.9 L140.2 141.1 L140.1 136.9 Z M124.9 148.6 L125.7 143.9 L129.1 146.4 Z M138.8 140.1 L141.9 136.6 L143.5 140.5 Z M144.2 137.4 L141.7 141.4 L139.5 137.8 Z M156.3 148.8 L152.5 146.1 L156.1 144.1 Z M170.3 134.7 L166.8 137.9 L165.6 133.9 Z M168.9 136.3 L173.1 134.3 L173.0 138.4 Z M179.9 134.6 L184.1 136.8 L180.7 139.3 Z M207.5 145.3 L203.1 143.6 L206.3 140.8 Z M203.8 136.0 L208.4 136.6 L206.1 140.1 Z M220.7 147.0 L216.4 144.9 L219.8 142.4 Z M15.1 143.8 L19.7 142.9 L18.6 146.9 Z M80.7 145.6 L76.5 147.6 L76.6 143.4 Z M87.1 145.2 L82.9 147.5 L82.8 143.3 Z M96.8 146.8 L92.4 148.4 L92.9 144.3 Z M115.0 144.7 L119.5 143.2 L118.9 147.4 Z M157.8 147.1 L153.3 148.5 L154.0 144.4 Z M199.7 145.5 L195.7 148.0 L195.3 143.8 Z M211.1 141.9 L215.8 141.2 L214.4 145.2 Z" fill="#000"/>
<rect width="200" height="150" fill="url(#shade)"/>
<path d="M128.0 124.0 C130.3 124.2 138.0 127.0 142.0 128.0 C146.0 129.0 148.8 128.8 152.0 130.0 C155.2 131.2 160.2 133.7 161.0 135.5 C161.8 137.3 158.8 140.5 157.0 141.0 C155.2 141.5 153.2 140.0 150.0 138.5 C146.8 137.0 141.7 133.9 138.0 132.0 C134.3 130.1 129.7 128.3 128.0 127.0 C126.3 125.7 125.7 123.8 128.0 124.0Z" fill="#f2f2f2" stroke="#aaa" stroke-width="0.5"/>
<path d="M130.0 126.0 C132.5 127.0 140.5 129.8 145.0 132.0 C149.5 134.2 155.0 137.8 157.0 139.0" fill="none" stroke="#b5b5b5" stroke-width="0.4"/>
<ellipse cx="114" cy="115" rx="9" ry="6" fill="#9a9a9a" opacity="0.6"/>
<path d="M121.0 111.0 C121.5 108.3 122.8 105.1 126.0 103.0 C129.2 100.9 134.3 99.6 140.0 98.5 C145.7 97.4 153.5 97.0 160.0 96.5 C166.5 96.0 176.0 94.4 179.0 95.5 C182.0 96.6 178.8 100.2 178.0 103.0 C177.2 105.8 176.0 109.0 174.0 112.0 C172.0 115.0 169.8 118.4 166.0 121.0 C162.2 123.6 156.3 127.0 151.0 127.7 C145.7 128.4 138.7 127.0 134.0 125.5 C129.3 124.0 125.2 121.4 123.0 119.0 C120.8 116.6 120.5 113.7 121.0 111.0Z" fill="#cfcfcf"/>
<path d="M121.6 107.7 C126.3 106.5 140.0 101.9 149.4 100.4 C158.9 99.0 173.5 99.1 178.3 98.9 M121.9 109.2 C126.3 108.2 139.2 104.4 148.3 103.3 C157.5 102.2 172.2 102.8 177.0 102.7 M122.2 110.6 C126.4 109.9 138.3 106.9 147.2 106.2 C156.1 105.5 170.9 106.4 175.7 106.4 M122.5 112.1 C126.4 111.6 137.5 109.4 146.1 109.1 C154.8 108.8 169.6 110.0 174.3 110.2 M122.8 113.5 C126.5 113.2 136.6 111.9 145.0 112.0 C153.4 112.1 168.3 113.7 173.0 114.0 M123.0 114.9 C126.5 114.9 136.4 114.5 143.9 114.9 C151.4 115.2 163.9 116.6 167.9 117.0 M123.3 116.4 C126.6 116.6 136.2 117.2 142.8 117.8 C149.4 118.4 159.4 119.6 162.8 120.0 M123.6 117.8 C126.6 118.3 136.0 119.8 141.7 120.7 C147.3 121.5 155.0 122.6 157.7 123.0 M123.9 119.3 C126.6 120.0 135.8 122.4 140.6 123.6 C145.3 124.7 150.6 125.6 152.6 126.0" fill="none" stroke="#555" stroke-width="0.45"/>
<path d="M123.0 119.0 C124.8 120.1 129.3 124.0 134.0 125.5 C138.7 127.0 145.7 128.4 151.0 127.7 C156.3 127.0 162.2 123.6 166.0 121.0 C169.8 118.4 171.8 116.2 174.0 112.0 C176.2 107.8 178.2 98.7 179.0 96.0" fill="none" stroke="#444" stroke-width="0.8"/>
<path d="M121.0 111.0 C121.8 109.7 122.8 105.1 126.0 103.0 C129.2 100.9 134.3 99.6 140.0 98.5 C145.7 97.4 153.5 97.0 160.0 96.5 C166.5 96.0 175.8 95.7 179.0 95.5" fill="none" stroke="#555" stroke-width="0.6"/>
</g>
<path d="M88.8 68.8 C85.8 62.9 74.0 39.2 71.0 33.3 M88.8 68.8 C91.0 63.4 99.9 42.0 102.1 36.6 M88.8 68.8 C96.6 64.4 127.6 46.6 135.4 42.2 M88.8 68.8 C98.2 68.1 136.0 65.1 145.4 64.4 M88.8 68.8 C98.4 71.4 136.9 81.8 146.5 84.4 M88.8 68.8 C80.7 68.1 48.1 65.1 40.0 64.4 M88.8 68.8 C84.4 69.9 68.4 73.3 62.2 75.5 C55.9 77.7 52.9 81.0 51.1 82.1 M88.8 68.8 C86.2 71.4 77.0 79.9 73.3 84.4 C69.6 88.8 67.7 93.6 66.6 95.4 M88.8 68.8 C88.4 71.4 86.6 79.5 86.6 84.4 C86.6 89.2 88.4 95.4 88.8 97.7 M88.8 68.8 C90.6 71.4 96.9 79.5 99.9 84.4 C102.8 89.2 105.4 95.4 106.5 97.7 M53.3 27.7 C61.0 27.4 85.8 24.6 99.9 25.5 C113.9 26.5 127.6 29.2 137.6 33.3 C147.6 37.4 156.1 47.2 159.8 49.9 M17.8 82.1 C22.2 81.8 37.0 78.1 44.4 79.9 C51.8 81.8 57.7 88.1 62.2 93.2 C66.6 98.4 69.6 108.0 71.0 111.0 M106.5 104.3 C112.5 103.2 133.2 100.6 142.1 97.7 C150.9 94.7 155.4 91.0 159.8 86.6 C164.3 82.1 167.2 73.6 168.7 71.0" stroke="#000" stroke-width="3.8" fill="none" stroke-linecap="round"/>
<path d="M88.8 68.8 C85.8 62.9 74.0 39.2 71.0 33.3 M88.8 68.8 C91.0 63.4 99.9 42.0 102.1 36.6 M88.8 68.8 C96.6 64.4 127.6 46.6 135.4 42.2 M88.8 68.8 C98.2 68.1 136.0 65.1 145.4 64.4 M88.8 68.8 C98.4 71.4 136.9 81.8 146.5 84.4 M88.8 68.8 C80.7 68.1 48.1 65.1 40.0 64.4 M88.8 68.8 C84.4 69.9 68.4 73.3 62.2 75.5 C55.9 77.7 52.9 81.0 51.1 82.1 M88.8 68.8 C86.2 71.4 77.0 79.9 73.3 84.4 C69.6 88.8 67.7 93.6 66.6 95.4 M88.8 68.8 C88.4 71.4 86.6 79.5 86.6 84.4 C86.6 89.2 88.4 95.4 88.8 97.7 M88.8 68.8 C90.6 71.4 96.9 79.5 99.9 84.4 C102.8 89.2 105.4 95.4 106.5 97.7 M53.3 27.7 C61.0 27.4 85.8 24.6 99.9 25.5 C113.9 26.5 127.6 29.2 137.6 33.3 C147.6 37.4 156.1 47.2 159.8 49.9 M17.8 82.1 C22.2 81.8 37.0 78.1 44.4 79.9 C51.8 81.8 57.7 88.1 62.2 93.2 C66.6 98.4 69.6 108.0 71.0 111.0 M106.5 104.3 C112.5 103.2 133.2 100.6 142.1 97.7 C150.9 94.7 155.4 91.0 159.8 86.6 C164.3 82.1 167.2 73.6 168.7 71.0" stroke="#e0e0e0" stroke-width="0.9" fill="none"/>
<path d="M69.5 30.2 L72.8 32.4 L69.2 34.2 Z M103.4 33.4 L104.0 37.4 L100.3 35.9 Z M138.4 40.4 L136.4 43.9 L134.4 40.4 Z M148.9 64.1 L145.6 66.4 L145.2 62.4 Z M149.9 85.3 L146.0 86.3 L147.0 82.4 Z M36.5 64.1 L40.1 62.4 L39.8 66.4 Z M48.1 83.9 L50.0 80.4 L52.1 83.8 Z M64.8 98.5 L64.9 94.4 L68.3 96.5 Z M89.4 101.1 L86.8 98.0 L90.8 97.3 Z M108.1 100.8 L104.8 98.6 L108.3 96.8 Z" fill="#000"/>
<circle cx="88.8" cy="68.8" r="7" fill="#fff" opacity="0.6"/>
<circle cx="88.8" cy="68.8" r="4.5" fill="#fafafa"/>
<use href="#bo" fill="none" stroke="#333" stroke-width="0.9"/>
</svg>
<svg class="abs" style="left:380px;top:330px" width="200" height="150" viewBox="0 0 200 150">
<g clip-path="url(#bc)">
<rect width="200" height="150" fill="#f3f3f3"/>
<rect width="200" height="150" filter="url(#sul2)" style="mix-blend-mode:multiply"/>
<path d="M59.9 44.4 C64.7 38.1 75.8 35.9 84.4 35.5 C92.9 35.1 105.1 37.0 111.0 42.2 C116.9 47.4 120.6 59.2 119.9 66.6 C119.1 74.0 114.3 82.9 106.5 86.6 C98.8 90.3 81.8 91.0 73.3 88.8 C64.7 86.6 57.7 80.7 55.5 73.3 C53.3 65.9 55.1 50.7 59.9 44.4Z" fill="#a8a8a8" opacity="0.35"/>
<path d="M55.5 73.3 C58.8 71.0 67.0 74.7 73.3 75.5 C79.5 76.2 90.6 75.5 93.2 77.7 C95.8 79.9 93.2 86.2 88.8 88.8 C84.4 91.4 72.5 93.2 66.6 93.2 C60.7 93.2 55.1 92.1 53.3 88.8 C51.4 85.5 52.2 75.5 55.5 73.3Z" fill="#888" opacity="0.35"/>
<path d="M52.2 104.3 C54.4 100.6 61.2 96.6 66.6 95.4 C72.0 94.3 78.8 96.2 84.4 97.7 C89.9 99.1 96.9 101.4 99.9 104.3 C102.8 107.3 104.0 111.9 102.1 115.4 C100.3 118.9 94.7 123.6 88.8 125.4 C82.9 127.3 72.5 127.8 66.6 126.5 C60.7 125.2 55.7 121.3 53.3 117.6 C50.9 113.9 49.9 108.0 52.2 104.3Z" fill="#fbfbfb" opacity="0.75"/>
<path d="M51.1 99.9 C53.6 98.8 60.3 94.3 66.6 93.2 C72.9 92.1 82.5 91.7 88.8 93.2 C95.1 94.7 101.4 99.1 104.3 102.1 C107.3 105.1 106.2 109.5 106.5 111.0" fill="none" stroke="#333" stroke-width="0.7"/>
<path d="M66.6 97.7 C67.7 99.1 72.5 103.2 73.3 106.5 C74.0 109.9 71.4 115.8 71.0 117.6" fill="none" stroke="#555" stroke-width="0.6"/>
<path d="M84.4 99.9 C84.7 101.7 85.1 107.7 86.6 111.0 C88.1 114.3 92.1 118.4 93.2 119.9" fill="none" stroke="#555" stroke-width="0.6"/>
<rect width="200" height="150" fill="url(#shade)"/>
<path d="M128.0 124.0 C130.3 124.2 138.0 127.0 142.0 128.0 C146.0 129.0 148.8 128.8 152.0 130.0 C155.2 131.2 160.2 133.7 161.0 135.5 C161.8 137.3 158.8 140.5 157.0 141.0 C155.2 141.5 153.2 140.0 150.0 138.5 C146.8 137.0 141.7 133.9 138.0 132.0 C134.3 130.1 129.7 128.3 128.0 127.0 C126.3 125.7 125.7 123.8 128.0 124.0Z" fill="#f2f2f2" stroke="#aaa" stroke-width="0.5"/>
<path d="M130.0 126.0 C132.5 127.0 140.5 129.8 145.0 132.0 C149.5 134.2 155.0 137.8 157.0 139.0" fill="none" stroke="#b5b5b5" stroke-width="0.4"/>
<ellipse cx="114" cy="115" rx="9" ry="6" fill="#9a9a9a" opacity="0.6"/>
<path d="M121.0 111.0 C121.5 108.3 122.8 105.1 126.0 103.0 C129.2 100.9 134.3 99.6 140.0 98.5 C145.7 97.4 153.5 97.0 160.0 96.5 C166.5 96.0 176.0 94.4 179.0 95.5 C182.0 96.6 178.8 100.2 178.0 103.0 C177.2 105.8 176.0 109.0 174.0 112.0 C172.0 115.0 169.8 118.4 166.0 121.0 C162.2 123.6 156.3 127.0 151.0 127.7 C145.7 128.4 138.7 127.0 134.0 125.5 C129.3 124.0 125.2 121.4 123.0 119.0 C120.8 116.6 120.5 113.7 121.0 111.0Z" fill="#d2d2d2"/>
<path d="M121.6 107.7 C126.3 106.5 140.0 101.9 149.4 100.4 C158.9 99.0 173.5 99.1 178.3 98.9 M121.9 109.2 C126.3 108.2 139.2 104.4 148.3 103.3 C157.5 102.2 172.2 102.8 177.0 102.7 M122.2 110.6 C126.4 109.9 138.3 106.9 147.2 106.2 C156.1 105.5 170.9 106.4 175.7 106.4 M122.5 112.1 C126.4 111.6 137.5 109.4 146.1 109.1 C154.8 108.8 169.6 110.0 174.3 110.2 M122.8 113.5 C126.5 113.2 136.6 111.9 145.0 112.0 C153.4 112.1 168.3 113.7 173.0 114.0 M123.0 114.9 C126.5 114.9 136.4 114.5 143.9 114.9 C151.4 115.2 163.9 116.6 167.9 117.0 M123.3 116.4 C126.6 116.6 136.2 117.2 142.8 117.8 C149.4 118.4 159.4 119.6 162.8 120.0 M123.6 117.8 C126.6 118.3 136.0 119.8 141.7 120.7 C147.3 121.5 155.0 122.6 157.7 123.0 M123.9 119.3 C126.6 120.0 135.8 122.4 140.6 123.6 C145.3 124.7 150.6 125.6 152.6 126.0" fill="none" stroke="#555" stroke-width="0.45"/>
<path d="M123.0 119.0 C124.8 120.1 129.3 124.0 134.0 125.5 C138.7 127.0 145.7 128.4 151.0 127.7 C156.3 127.0 162.2 123.6 166.0 121.0 C169.8 118.4 171.8 116.2 174.0 112.0 C176.2 107.8 178.2 98.7 179.0 96.0" fill="none" stroke="#444" stroke-width="0.8"/>
<path d="M121.0 111.0 C121.8 109.7 122.8 105.1 126.0 103.0 C129.2 100.9 134.3 99.6 140.0 98.5 C145.7 97.4 153.5 97.0 160.0 96.5 C166.5 96.0 175.8 95.7 179.0 95.5" fill="none" stroke="#555" stroke-width="0.6"/>
</g>
<path d="M81.0 16.0 C77.8 17.5 66.8 21.2 62.0 25.0 C57.2 28.8 53.3 33.5 52.0 39.0 C50.7 44.5 51.2 51.8 54.0 58.0 C56.8 64.2 66.5 73.0 69.0 76.0 M82.0 18.3 C79.1 19.7 68.9 23.1 64.3 26.6 C59.8 30.0 56.0 33.8 54.6 39.0 C53.2 44.2 53.5 51.8 56.1 58.0 C58.7 64.2 67.9 73.0 70.3 76.0 M83.1 20.7 C80.3 21.9 71.0 25.1 66.7 28.1 C62.4 31.2 58.6 34.0 57.2 39.0 C55.8 44.0 55.8 51.8 58.2 58.0 C60.6 64.2 69.4 73.0 71.6 76.0 M84.1 23.0 C81.6 24.1 73.1 27.0 69.0 29.7 C65.0 32.3 61.3 34.3 59.8 39.0 C58.3 43.7 58.1 51.8 60.2 58.0 C62.4 64.2 70.8 73.0 72.9 76.0" stroke="#111" stroke-width="0.9" fill="none"/>
<path d="M93.0 15.5 C92.2 20.4 90.8 35.1 88.0 45.0 C85.2 54.9 78.0 70.0 76.0 75.0 M95.2 15.5 C94.5 20.4 93.3 35.1 90.5 45.0 C87.8 54.9 80.8 70.0 78.8 75.0 M97.5 15.5 C96.7 20.4 95.7 35.1 93.0 45.0 C90.4 54.9 83.5 70.0 81.6 75.0 M99.7 15.5 C99.0 20.4 98.1 35.1 95.6 45.0 C93.0 54.9 86.3 70.0 84.4 75.0" stroke="#111" stroke-width="0.9" fill="none"/>
<path d="M92.8 13.3 L94.1 15.4 L91.9 15.6 Z M95.0 13.3 L96.3 15.4 L94.1 15.6 Z M97.3 13.3 L98.6 15.4 L96.4 15.6 Z M99.5 13.3 L100.8 15.4 L98.6 15.6 Z" fill="#111"/>
<path d="M106.0 14.0 C107.3 20.8 111.3 40.7 114.0 55.0 C116.7 69.3 120.7 92.5 122.0 100.0 M109.2 14.7 C110.4 21.4 114.0 40.8 116.5 55.0 C118.9 69.2 122.8 92.5 124.1 100.0 M112.3 15.4 C113.4 22.0 116.6 40.9 118.9 55.0 C121.2 69.1 125.0 92.5 126.2 100.0 M115.5 16.1 C116.4 22.6 119.2 41.0 121.3 55.0 C123.5 69.0 127.1 92.5 128.3 100.0 M118.6 16.8 C119.5 23.2 121.8 41.1 123.8 55.0 C125.8 68.9 129.3 92.5 130.4 100.0 M121.8 17.5 C122.5 23.8 124.5 41.2 126.2 55.0 C128.0 68.8 131.5 92.5 132.5 100.0 M93.2 73.3 C96.2 75.1 105.8 79.9 111.0 84.4 C116.2 88.8 122.1 97.3 124.3 99.9 M95.4 68.8 C98.8 70.7 110.1 75.1 115.4 79.9 C120.8 84.7 125.6 94.7 127.6 97.7 M108.0 16.0 C106.7 20.0 102.2 31.0 100.0 40.0 C97.8 49.0 95.8 65.0 95.0 70.0" stroke="#666" stroke-width="0.65" fill="none"/>
<use href="#bo" fill="none" stroke="#555" stroke-width="0.8"/>
</svg>
<svg class="abs" style="left:380px;top:485px" width="200" height="150" viewBox="0 0 200 150">
<g clip-path="url(#bc)">
<rect width="200" height="150" fill="#e6e6e6"/>
<rect width="200" height="150" filter="url(#sul3)" style="mix-blend-mode:multiply"/>
<path d="M51.1 84.4 C47.2 80.1 47.4 67.9 49.9 62.2 C52.5 56.4 59.4 52.5 66.6 49.9 C73.8 47.4 85.1 45.7 93.2 46.6 C101.4 47.5 110.6 51.4 115.4 55.5 C120.2 59.6 123.6 65.9 122.1 71.0 C120.6 76.2 114.7 83.8 106.5 86.6 C98.4 89.3 82.5 88.1 73.3 87.7 C64.0 87.3 54.9 88.6 51.1 84.4Z" fill="#a8a8a8" opacity="0.35"/>
<path d="M73.3 88.8 C71.0 89.3 57.9 89.9 53.3 86.6 C48.6 83.2 45.5 74.5 45.5 68.8 C45.5 63.1 49.0 56.0 53.3 52.2 C57.5 48.3 68.8 45.0 71.0 45.5 C73.3 46.1 68.3 51.2 66.6 55.5 C64.9 59.7 61.0 66.4 61.0 71.0 C61.0 75.7 64.6 80.3 66.6 83.2 C68.6 86.2 75.5 88.2 73.3 88.8Z" fill="#8a8a8a" opacity="0.45"/>
<path d="M66.6 49.3 C71.0 48.8 85.6 45.9 93.2 46.6 C100.8 47.3 107.4 49.6 112.1 53.3 C116.8 57.0 121.1 64.0 121.6 68.8 C122.2 73.6 116.5 79.9 115.4 82.1" fill="none" stroke="#7a7a7a" stroke-width="5" opacity="0.5"/>
<path d="M59.9 91.0 C62.9 89.5 71.0 84.5 77.7 82.1 C84.4 79.7 92.1 78.1 99.9 76.6 C107.7 75.1 120.2 73.8 124.3 73.3" fill="none" stroke="#444" stroke-width="1.2" opacity="0.7"/>
<path d="M88.8 75.5 C85.1 71.8 70.3 57.0 66.6 53.3 M88.8 75.5 C88.1 70.8 85.1 52.3 84.4 47.7 M88.8 75.5 C91.0 71.2 99.9 54.2 102.1 49.9 M88.8 75.5 C93.2 72.9 111.0 62.5 115.4 59.9 M88.8 75.5 C83.2 74.7 61.0 71.8 55.5 71.0 M88.8 75.5 C84.4 77.0 66.6 82.9 62.2 84.4 M88.8 75.5 C93.2 76.2 111.0 79.2 115.4 79.9" fill="none" stroke="#555" stroke-width="0.6"/>
<circle cx="88.8" cy="74.4" r="3.5" fill="#fafafa" opacity="0.9"/>
<path d="M108.8 13.3 L112.3 33.3 L105.3 33.3 Z" fill="#666" opacity="0.45"/>
<path d="M28.9 42.2 L44.8 55.4 L39.5 60.0 Z" fill="#777" opacity="0.35"/>
<path d="M20.0 73.3 L36.0 72.0 L35.0 78.9 Z" fill="#777" opacity="0.35"/>
<path d="M162.0 37.7 L153.6 53.3 L148.3 48.8 Z" fill="#777" opacity="0.35"/>
<path d="M177.6 77.7 L162.0 81.2 L162.0 74.2 Z" fill="#777" opacity="0.35"/>
<path d="M75.5 115.4 L76.5 96.8 L83.3 98.5 Z" fill="#777" opacity="0.35"/>
<path d="M53.3 104.3 C55.3 100.6 61.4 96.6 66.6 95.4 C71.8 94.3 78.8 96.2 84.4 97.7 C89.9 99.1 96.9 101.4 99.9 104.3 C102.8 107.3 104.0 111.9 102.1 115.4 C100.3 118.9 94.7 123.6 88.8 125.4 C82.9 127.3 72.3 127.8 66.6 126.5 C60.9 125.2 56.6 121.3 54.4 117.6 C52.2 113.9 51.2 108.0 53.3 104.3Z" fill="#f8f8f8" opacity="0.5"/>
<path d="M51.1 99.9 C53.6 98.8 60.3 94.3 66.6 93.2 C72.9 92.1 82.5 91.7 88.8 93.2 C95.1 94.7 101.4 99.1 104.3 102.1 C107.3 105.1 106.2 109.5 106.5 111.0" fill="none" stroke="#333" stroke-width="0.7"/>
<rect width="200" height="150" fill="url(#shade)"/>
<path d="M128.0 124.0 C130.3 124.2 138.0 127.0 142.0 128.0 C146.0 129.0 148.8 128.8 152.0 130.0 C155.2 131.2 160.2 133.7 161.0 135.5 C161.8 137.3 158.8 140.5 157.0 141.0 C155.2 141.5 153.2 140.0 150.0 138.5 C146.8 137.0 141.7 133.9 138.0 132.0 C134.3 130.1 129.7 128.3 128.0 127.0 C126.3 125.7 125.7 123.8 128.0 124.0Z" fill="#f2f2f2" stroke="#aaa" stroke-width="0.5"/>
<path d="M130.0 126.0 C132.5 127.0 140.5 129.8 145.0 132.0 C149.5 134.2 155.0 137.8 157.0 139.0" fill="none" stroke="#b5b5b5" stroke-width="0.4"/>
<ellipse cx="114" cy="115" rx="9" ry="6" fill="#9a9a9a" opacity="0.6"/>
<path d="M121.0 111.0 C121.5 108.3 122.8 105.1 126.0 103.0 C129.2 100.9 134.3 99.6 140.0 98.5 C145.7 97.4 153.5 97.0 160.0 96.5 C166.5 96.0 176.0 94.4 179.0 95.5 C182.0 96.6 178.8 100.2 178.0 103.0 C177.2 105.8 176.0 109.0 174.0 112.0 C172.0 115.0 169.8 118.4 166.0 121.0 C162.2 123.6 156.3 127.0 151.0 127.7 C145.7 128.4 138.7 127.0 134.0 125.5 C129.3 124.0 125.2 121.4 123.0 119.0 C120.8 116.6 120.5 113.7 121.0 111.0Z" fill="#d4d4d4"/>
<path d="M121.6 107.7 C126.3 106.5 140.0 101.9 149.4 100.4 C158.9 99.0 173.5 99.1 178.3 98.9 M121.9 109.2 C126.3 108.2 139.2 104.4 148.3 103.3 C157.5 102.2 172.2 102.8 177.0 102.7 M122.2 110.6 C126.4 109.9 138.3 106.9 147.2 106.2 C156.1 105.5 170.9 106.4 175.7 106.4 M122.5 112.1 C126.4 111.6 137.5 109.4 146.1 109.1 C154.8 108.8 169.6 110.0 174.3 110.2 M122.8 113.5 C126.5 113.2 136.6 111.9 145.0 112.0 C153.4 112.1 168.3 113.7 173.0 114.0 M123.0 114.9 C126.5 114.9 136.4 114.5 143.9 114.9 C151.4 115.2 163.9 116.6 167.9 117.0 M123.3 116.4 C126.6 116.6 136.2 117.2 142.8 117.8 C149.4 118.4 159.4 119.6 162.8 120.0 M123.6 117.8 C126.6 118.3 136.0 119.8 141.7 120.7 C147.3 121.5 155.0 122.6 157.7 123.0 M123.9 119.3 C126.6 120.0 135.8 122.4 140.6 123.6 C145.3 124.7 150.6 125.6 152.6 126.0" fill="none" stroke="#555" stroke-width="0.45"/>
<path d="M123.0 119.0 C124.8 120.1 129.3 124.0 134.0 125.5 C138.7 127.0 145.7 128.4 151.0 127.7 C156.3 127.0 162.2 123.6 166.0 121.0 C169.8 118.4 171.8 116.2 174.0 112.0 C176.2 107.8 178.2 98.7 179.0 96.0" fill="none" stroke="#444" stroke-width="0.8"/>
<path d="M121.0 111.0 C121.8 109.7 122.8 105.1 126.0 103.0 C129.2 100.9 134.3 99.6 140.0 98.5 C145.7 97.4 153.5 97.0 160.0 96.5 C166.5 96.0 175.8 95.7 179.0 95.5" fill="none" stroke="#555" stroke-width="0.6"/>
<ellipse cx="124.5" cy="108.5" rx="3.2" ry="2.6" fill="#111"/>
</g>
<use href="#bo" fill="none" stroke="#555" stroke-width="0.8"/>
</svg>
</body></html>
